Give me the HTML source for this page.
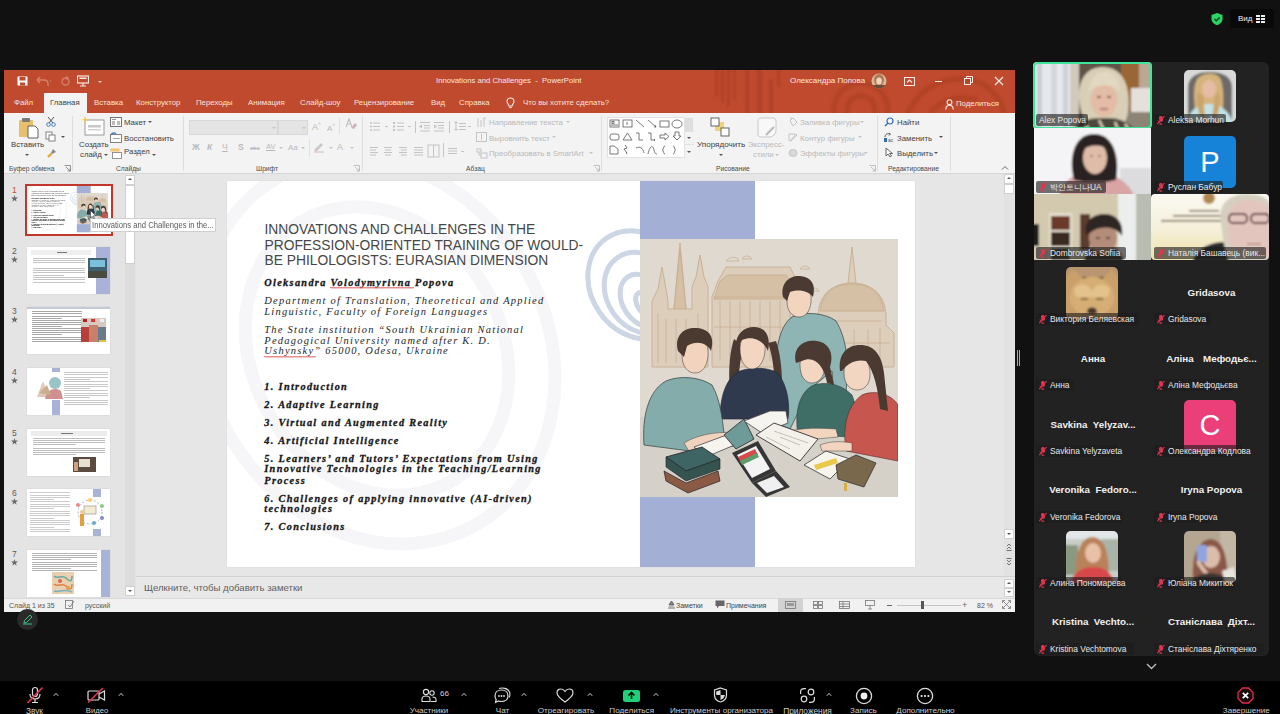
<!DOCTYPE html>
<html><head><meta charset="utf-8">
<style>
*{margin:0;padding:0;box-sizing:border-box}
html,body{width:1280px;height:714px;overflow:hidden;background:#111111;font-family:"Liberation Sans",sans-serif;position:relative}
.a{position:absolute}
.t{position:absolute;white-space:nowrap;line-height:1}
.tab{top:99px;font-size:7.8px;color:#f9e2db}
.rt{font-size:7.8px;color:#3f3f3f}
.dt{font-size:7.8px;color:#b9b9b9}
.gl{top:165.5px;font-size:6.7px;color:#4a4a4a}
.arr{width:0;height:0;border-left:2px solid transparent;border-right:2px solid transparent;border-top:2px solid #555}
.arr.dis{border-top-color:#c4c4c4}
.vsep{top:116px;width:1px;height:55px;background:#dedede}
.lab{position:absolute;height:12px;background:rgba(30,30,30,.72);border-radius:2px;font-size:8px;color:#e6e6e6;line-height:12px;padding:0 3px 0 15px;white-space:nowrap}
.lab.nomic{padding-left:3px}
.nm{position:absolute;width:118px;text-align:center;font-size:9.8px;font-weight:bold;color:#f0f0f0;white-space:nowrap;line-height:1}
.tb{position:absolute;top:704px;font-size:8px;color:#d0d0d0;white-space:nowrap;line-height:1}
.arr.up{border-top:0;border-bottom:2px solid #555}
.stitle{font-size:13.8px;letter-spacing:0;color:#474747}
.sbi{font-family:"Liberation Serif",serif;font-weight:bold;font-style:italic;font-size:10.28px;letter-spacing:1.33px;color:#161616;-webkit-text-stroke:0.3px #161616}
.si{font-family:"Liberation Serif",serif;font-style:italic;font-size:10.48px;letter-spacing:1.24px;color:#262626}
</style></head><body>
<!-- top right view button -->
<div class="a" style="left:1230px;top:9px;width:44px;height:19px;background:#090909;border-radius:4px"></div>
<svg class="a" style="left:1210px;top:12px" width="14" height="14" viewBox="0 0 14 14"><path d="M7 1 L12.5 3 V7 C12.5 10 10 12.2 7 13.2 C4 12.2 1.5 10 1.5 7 V3 Z" fill="#2ad463"/><path d="M4.5 7 L6.3 8.8 L9.6 5.4" stroke="#0c3d1c" stroke-width="1.5" fill="none"/></svg>
<div class="t" style="left:1238px;top:15px;font-size:8px;color:#eee">Вид</div>
<svg class="a" style="left:1256px;top:15px" width="9" height="8" viewBox="0 0 9 8"><g fill="#eee"><rect x="0" y="0" width="4" height="2"/><rect x="5" y="0" width="4" height="2"/><rect x="0" y="3" width="4" height="2"/><rect x="5" y="3" width="4" height="2"/><rect x="0" y="6" width="4" height="2"/><rect x="5" y="6" width="4" height="2"/></g></svg>
<!-- ===== PPT WINDOW ===== -->
<div class="a" style="left:4px;top:70px;width:1011px;height:542px;background:#e6e6e6"></div>
<div class="a" style="left:4px;top:70px;width:1011px;height:43px;background:#bf4a2d"></div>
<!-- decorative pattern -->
<svg class="a" style="left:701px;top:70px" width="314" height="43" viewBox="0 0 314 43">
  <defs><filter id="pb" x="-5%" y="-20%" width="110%" height="140%"><feGaussianBlur stdDeviation="1.3"/></filter><clipPath id="pc"><rect width="314" height="43"/></clipPath></defs>
  <g clip-path="url(#pc)"><g filter="url(#pb)">
  <g fill="#ae3f26" opacity="0.75">
    <rect x="14" y="-4" width="3" height="30"/><rect x="20" y="-4" width="3" height="36"/><rect x="26" y="-4" width="3" height="40"/><rect x="32" y="-4" width="3" height="34"/>
    <rect x="44" y="-4" width="4" height="48"/><rect x="56" y="-4" width="5" height="48"/>
    <rect x="68" y="10" width="4" height="34"/><rect x="76" y="-4" width="3" height="20"/>
  </g>
  <g fill="none" stroke="#ad3f26" stroke-width="5" opacity="0.7">
    <circle cx="160" cy="40" r="14"/><circle cx="160" cy="40" r="27"/>
    <path d="M205 48 C215 20 240 5 270 10 C290 14 300 30 305 48"/><path d="M226 48 C236 30 256 24 276 30"/>
  </g>
  </g></g>
</svg>
<!-- QAT -->
<svg class="a" style="left:17px;top:76px" width="11" height="10" viewBox="0 0 11 10"><rect x="0.5" y="0.5" width="10" height="9" fill="#fff" rx="0.5"/><rect x="2.5" y="1" width="6" height="3.5" fill="#bf4a2d"/><rect x="3" y="6.5" width="5" height="3" fill="#bf4a2d"/></svg>
<svg class="a" style="left:36px;top:76px" width="16" height="11" viewBox="0 0 16 11"><path d="M2 4 H8 C11 4 12 6 12 8 V10" stroke="#d9826c" stroke-width="1.4" fill="none"/><path d="M1 4 L4 1 M1 4 L4 7" stroke="#d9826c" stroke-width="1.4"/><circle cx="14.5" cy="5" r="0.8" fill="#d9826c"/></svg>
<svg class="a" style="left:61px;top:76px" width="9" height="10" viewBox="0 0 9 10"><circle cx="4.5" cy="5.5" r="3.5" stroke="#d9826c" stroke-width="1.3" fill="none"/><path d="M5 0.5 L7 2 L5 3.5" stroke="#d9826c" stroke-width="1.2" fill="none"/></svg>
<svg class="a" style="left:77px;top:75px" width="12" height="12" viewBox="0 0 12 12"><rect x="0.5" y="1" width="11" height="7" fill="none" stroke="#fbe9e4" stroke-width="1.2"/><rect x="2.5" y="2.5" width="7" height="1.5" fill="#fbe9e4"/><path d="M6 8 V11 M3 11 H9" stroke="#fbe9e4" stroke-width="1.2"/></svg>
<div class="a" style="left:98px;top:81px;width:4px;height:2px;border-left:2px solid transparent;border-right:2px solid transparent;border-top:2.5px solid #f3d4cb"></div>
<div class="t" style="left:436px;top:77px;font-size:7.7px;color:#fbe7e1">Innovations and Challenges&nbsp; - &nbsp;PowerPoint</div>
<div class="t" style="left:790px;top:77px;font-size:8px;color:#fbe7e1">Олександра Попова</div>
<svg class="a" style="left:871px;top:73px" width="16" height="16" viewBox="0 0 16 16"><defs><clipPath id="avc"><circle cx="8" cy="8" r="7.5"/></clipPath></defs><g clip-path="url(#avc)"><rect width="16" height="16" fill="#d8b89c"/><ellipse cx="8" cy="7" rx="5" ry="6" fill="#b07a52"/><ellipse cx="8" cy="8" rx="2.8" ry="3.5" fill="#f0d4bd"/><rect x="2" y="12" width="12" height="5" fill="#6e4b36"/></g></svg>
<svg class="a" style="left:904px;top:77px" width="11" height="9" viewBox="0 0 11 9"><rect x="0.5" y="0.5" width="10" height="8" fill="none" stroke="#fbe9e4" stroke-width="1"/><path d="M3 5.5 L5.5 3 L8 5.5" stroke="#fbe9e4" stroke-width="1.1" fill="none"/></svg>
<div class="a" style="left:935px;top:81px;width:7px;height:1px;background:#fbe9e4"></div>
<svg class="a" style="left:964px;top:76px" width="9" height="9" viewBox="0 0 9 9"><rect x="0.5" y="2.5" width="6" height="6" fill="none" stroke="#fbe9e4" stroke-width="1"/><path d="M2.5 2.5 V0.5 H8.5 V6.5 H6.5" fill="none" stroke="#fbe9e4" stroke-width="1"/></svg>
<svg class="a" style="left:994px;top:76px" width="10" height="10" viewBox="0 0 10 10"><path d="M1 1 L9 9 M9 1 L1 9" stroke="#fbe9e4" stroke-width="1.2"/></svg>

<!-- tabs -->
<div class="a" style="left:44px;top:93px;width:43px;height:20px;background:#f3f3f3"></div>
<div class="t tab" style="left:14px;">Файл</div>
<div class="t tab" style="left:50px;color:#444">Главная</div>
<div class="t tab" style="left:94px;">Вставка</div>
<div class="t tab" style="left:136px;">Конструктор</div>
<div class="t tab" style="left:196px;">Переходы</div>
<div class="t tab" style="left:248px;">Анимация</div>
<div class="t tab" style="left:300px;">Слайд-шоу</div>
<div class="t tab" style="left:354px;">Рецензирование</div>
<div class="t tab" style="left:431px;">Вид</div>
<div class="t tab" style="left:459px;">Справка</div>
<svg class="a" style="left:506px;top:97px" width="9" height="12" viewBox="0 0 9 12"><path d="M4.5 1 C2 1 1 3 1 4.5 C1 6.5 3 7.5 3 9 H6 C6 7.5 8 6.5 8 4.5 C8 3 7 1 4.5 1 Z" fill="none" stroke="#fbe9e4" stroke-width="1.1"/><path d="M3.2 10.5 H5.8" stroke="#fbe9e4" stroke-width="1.1"/></svg>
<div class="t tab" style="left:523px;">Что вы хотите сделать?</div>
<svg class="a" style="left:945px;top:99px" width="9" height="11" viewBox="0 0 9 11"><circle cx="4.5" cy="3.2" r="2.4" fill="none" stroke="#fbe9e4" stroke-width="1.1"/><path d="M0.8 10.5 C0.8 7.5 2.5 6.2 4.5 6.2 C6.5 6.2 8.2 7.5 8.2 10.5" fill="none" stroke="#fbe9e4" stroke-width="1.1"/></svg>
<div class="t tab" style="left:956px;top:100px">Поделиться</div>

<!-- ribbon body -->
<div class="a" style="left:4px;top:113px;width:1011px;height:61px;background:#f3f3f3;border-bottom:1px solid #d6d6d6"></div>
<!-- separators -->
<div class="a vsep" style="left:72px"></div>
<div class="a vsep" style="left:183px"></div>
<div class="a vsep" style="left:362px"></div>
<div class="a vsep" style="left:601px"></div>
<div class="a vsep" style="left:877px"></div>
<div class="a vsep" style="left:950px"></div>
<!-- Clipboard -->
<svg class="a" style="left:18px;top:117px" width="22" height="22" viewBox="0 0 22 22"><rect x="1" y="3" width="14" height="17" rx="1" fill="#e9be6c"/><rect x="4" y="1" width="8" height="4" rx="1" fill="#7a7a7a"/><path d="M10 9 H17 L20 12 V21 H10 Z" fill="#fff" stroke="#555" stroke-width="0.9"/></svg>
<div class="t rt" style="left:11px;top:141px">Вставить</div>
<div class="a arr" style="left:25px;top:154px"></div>
<svg class="a" style="left:46px;top:116px" width="10" height="11" viewBox="0 0 10 11"><path d="M2 1 L7 7 M8 1 L3 7" stroke="#555" stroke-width="1"/><circle cx="2.5" cy="8.5" r="1.8" fill="none" stroke="#3d7bc4" stroke-width="1"/><circle cx="7.5" cy="8.5" r="1.8" fill="none" stroke="#3d7bc4" stroke-width="1"/></svg>
<svg class="a" style="left:45px;top:131px" width="11" height="11" viewBox="0 0 11 11"><rect x="1" y="1" width="6" height="7" fill="#fff" stroke="#777" stroke-width="0.9"/><rect x="4" y="4" width="6" height="6" fill="#fff" stroke="#777" stroke-width="0.9"/></svg>
<div class="a arr" style="left:61px;top:136px"></div>
<svg class="a" style="left:47px;top:148px" width="10" height="10" viewBox="0 0 10 10"><path d="M6 1 L9 4 L5 6 L4 5 Z" fill="#888"/><path d="M4.5 5.5 L1 9" stroke="#e6a83a" stroke-width="2.4"/></svg>
<div class="t gl" style="left:9px">Буфер обмена</div>
<svg class="a launch" style="left:64px;top:165px" width="7" height="7" viewBox="0 0 7 7"><path d="M0.5 0.5 H6.5 V6.5 M2 2 L6 6 M6 3.5 V6 H3.5" stroke="#888" stroke-width="0.9" fill="none"/></svg>
<!-- Slides -->
<svg class="a" style="left:82px;top:116px" width="23" height="20" viewBox="0 0 23 20"><rect x="3" y="4" width="19" height="15" fill="#fff" stroke="#9a9a9a" stroke-width="1"/><rect x="6" y="9" width="13" height="2.5" fill="#c8c8c8"/><rect x="6" y="13" width="13" height="1.5" fill="#d4d4d4"/><path d="M3 0 L4 3 L7 3.5 L4 4.5 L3 7.5 L2 4.5 L0 3.5 L2 3 Z" fill="#f3c94a"/></svg>
<div class="t rt" style="left:79px;top:141px">Создать</div>
<div class="t rt" style="left:80px;top:151px">слайд</div>
<div class="a arr" style="left:104px;top:154px"></div>
<svg class="a" style="left:110px;top:117px" width="12" height="10" viewBox="0 0 12 10"><rect x="0.5" y="0.5" width="11" height="9" fill="#fff" stroke="#666" stroke-width="0.9"/><rect x="2" y="2" width="4" height="1" fill="#999"/><rect x="2" y="4" width="3" height="4" fill="#bbb"/><rect x="7" y="4" width="3" height="4" fill="#bbb"/></svg>
<div class="t rt" style="left:124px;top:119px">Макет</div>
<div class="a arr" style="left:148px;top:121px"></div>
<svg class="a" style="left:110px;top:132px" width="12" height="11" viewBox="0 0 12 11"><rect x="0.5" y="2.5" width="11" height="8" fill="#fff" stroke="#777" stroke-width="0.9"/><path d="M1 3 C2 0.5 5 0.5 6 2" stroke="#3d7bc4" stroke-width="1.3" fill="none"/><rect x="3" y="6" width="7" height="1" fill="#aaa"/></svg>
<div class="t rt" style="left:124px;top:134.5px">Восстановить</div>
<svg class="a" style="left:110px;top:148px" width="12" height="11" viewBox="0 0 12 11"><rect x="0.5" y="0.5" width="9" height="3" fill="#f1c36a"/><rect x="2.5" y="4.5" width="9" height="6" fill="#fff" stroke="#888" stroke-width="0.9"/></svg>
<div class="t rt" style="left:124px;top:148px">Раздел</div>
<div class="a arr" style="left:152px;top:154px"></div>
<div class="t gl" style="left:116px">Слайды</div>
<!-- Font -->
<div class="a" style="left:189px;top:120px;width:89px;height:15px;background:#e4e4e4;border:1px solid #d8d8d8"></div>
<div class="a" style="left:278px;top:120px;width:30px;height:15px;background:#e4e4e4;border:1px solid #d8d8d8"></div>
<div class="a arr dis" style="left:272px;top:127px"></div>
<div class="a arr dis" style="left:302px;top:127px"></div>
<div class="t dt" style="left:312px;top:122px;font-size:9px">A<sup style="font-size:5px">˄</sup></div>
<div class="t dt" style="left:327px;top:123px;font-size:8px">A<sup style="font-size:5px">˅</sup></div>
<div class="a" style="left:339px;top:118px;width:1px;height:16px;background:#e0e0e0"></div>
<svg class="a" style="left:345px;top:118px" width="12" height="12" viewBox="0 0 12 12"><path d="M1 9 L4 1 L7 9 M2.2 6 H5.8" stroke="#c0c0c0" stroke-width="1.2" fill="none"/><path d="M6 10 L10 5 L12 7 L9 11 Z" fill="#d0b0c0"/></svg>
<div class="t dt" style="left:192px;top:143px;font-size:8.5px;font-weight:bold">Ж</div>
<div class="t dt" style="left:207px;top:143px;font-size:8.5px;font-weight:bold;font-style:italic">К</div>
<div class="t dt" style="left:222px;top:143px;font-size:8.5px;text-decoration:underline">Ч</div>
<div class="t dt" style="left:238px;top:143px;font-size:8.5px;font-weight:bold">S</div>
<div class="t dt" style="left:250px;top:145px;font-size:6px;text-decoration:line-through">abc</div>
<div class="t dt" style="left:266px;top:143px;font-size:7.5px;text-decoration:underline">AV</div>
<div class="a arr dis" style="left:279px;top:147px"></div>
<div class="t dt" style="left:288px;top:144px;font-size:8px">Aa</div>
<div class="a arr dis" style="left:301px;top:147px"></div>
<div class="a" style="left:309px;top:140px;width:1px;height:16px;background:#e0e0e0"></div>
<svg class="a" style="left:313px;top:142px" width="12" height="11" viewBox="0 0 12 11"><path d="M2 9 L9 2" stroke="#c8c8c8" stroke-width="2.5"/><path d="M1 10 H11" stroke="#e4c8d8" stroke-width="1.5"/></svg>
<div class="a arr dis" style="left:329px;top:147px"></div>
<div class="t dt" style="left:337px;top:143px;font-size:9px">A</div>
<div class="a arr dis" style="left:350px;top:147px"></div>
<div class="t gl" style="left:256px">Шрифт</div>
<svg class="a launch" style="left:353px;top:165px" width="7" height="7" viewBox="0 0 7 7"><path d="M0.5 0.5 H6.5 V6.5 M2 2 L6 6 M6 3.5 V6 H3.5" stroke="#bbb" stroke-width="0.9" fill="none"/></svg>
<!-- Paragraph -->
<svg class="a" style="left:368px;top:121px" width="240" height="42" viewBox="0 0 240 42">
 <g fill="#c4c4c4">
  <!-- bullets -->
  <circle cx="3" cy="2" r="1"/><circle cx="3" cy="5.5" r="1"/><circle cx="3" cy="9" r="1"/>
  <rect x="5" y="1.5" width="7" height="1"/><rect x="5" y="5" width="7" height="1"/><rect x="5" y="8.5" width="7" height="1"/>
  <rect x="17" y="5" width="3" height="1"/>
  <!-- numbering -->
  <rect x="25" y="1" width="2" height="2"/><rect x="25" y="4.5" width="2" height="2"/><rect x="25" y="8" width="2" height="2"/>
  <rect x="29" y="1.5" width="7" height="1"/><rect x="29" y="5" width="7" height="1"/><rect x="29" y="8.5" width="7" height="1"/>
  <rect x="40" y="5" width="3" height="1"/>
  <rect x="47" y="-2" width="1" height="14"/>
  <!-- indent -->
  <rect x="52" y="1" width="10" height="1"/><rect x="56" y="4" width="6" height="1"/><rect x="56" y="6.5" width="6" height="1"/><rect x="52" y="9.5" width="10" height="1"/><path d="M51 5.5 L54 3.5 V7.5 Z"/>
  <rect x="66" y="1" width="10" height="1"/><rect x="70" y="4" width="6" height="1"/><rect x="70" y="6.5" width="6" height="1"/><rect x="66" y="9.5" width="10" height="1"/><path d="M69 5.5 L66 3.5 V7.5 Z"/>
  <rect x="81" y="-2" width="1" height="14"/>
  <!-- line spacing -->
  <rect x="91" y="2" width="7" height="1"/><rect x="91" y="5" width="7" height="1"/><rect x="91" y="8" width="7" height="1"/><path d="M88 0 L90 2 H86 Z M88 10 L90 8 H86 Z"/><rect x="87.5" y="2" width="1" height="6"/>
  <rect x="100" y="5" width="3" height="1"/>
  <!-- row 2 aligns -->
  <rect x="2" y="26" width="8" height="1"/><rect x="2" y="28.5" width="6" height="1"/><rect x="2" y="31" width="8" height="1"/><rect x="2" y="33.5" width="6" height="1"/>
  <rect x="16" y="26" width="8" height="1"/><rect x="17" y="28.5" width="6" height="1"/><rect x="16" y="31" width="8" height="1"/><rect x="17" y="33.5" width="6" height="1"/>
  <rect x="31" y="26" width="8" height="1"/><rect x="33" y="28.5" width="6" height="1"/><rect x="31" y="31" width="8" height="1"/><rect x="33" y="33.5" width="6" height="1"/>
  <rect x="46" y="26" width="9" height="1"/><rect x="46" y="28.5" width="9" height="1"/><rect x="46" y="31" width="9" height="1"/><rect x="46" y="33.5" width="9" height="1"/>
  <rect x="60" y="24" width="11" height="12" fill="none" stroke="#c4c4c4" stroke-width="1"/><rect x="65" y="24" width="1" height="12"/>
  <rect x="75" y="22" width="1" height="14"/>
  <rect x="80" y="27" width="9" height="1"/><rect x="80" y="29.5" width="9" height="1"/><rect x="80" y="32" width="9" height="1"/>
  <rect x="93" y="30" width="3" height="1"/>
 </g>
</svg>
<svg class="a" style="left:476px;top:116px" width="12" height="43" viewBox="0 0 12 43"><g stroke="#c4c4c4" stroke-width="1" fill="none"><path d="M2 2 V11 M5 4 V11 M8 2 V11 M8 1 L9.5 3"/><rect x="0.5" y="16.5" width="10" height="9"/><path d="M5.5 18 V24"/><rect x="1" y="33" width="4" height="3"/><rect x="5" y="37" width="6" height="5"/><path d="M3 36 V39 H5"/></g></svg>
<div class="t dt" style="left:489px;top:119px">Направление текста</div>
<div class="a arr dis" style="left:566px;top:121px"></div>
<div class="t dt" style="left:489px;top:134.5px">Выровнить текст</div>
<div class="a arr dis" style="left:552px;top:136px"></div>
<div class="t dt" style="left:489px;top:149.5px">Преобразовать в SmartArt</div>
<div class="a arr dis" style="left:589px;top:152px"></div>
<div class="t gl" style="left:466px">Абзац</div>
<svg class="a launch" style="left:593px;top:165px" width="7" height="7" viewBox="0 0 7 7"><path d="M0.5 0.5 H6.5 V6.5 M2 2 L6 6 M6 3.5 V6 H3.5" stroke="#bbb" stroke-width="0.9" fill="none"/></svg>
<!-- Drawing -->
<div class="a" style="left:607px;top:117px;width:87px;height:41px;background:#fff;border:1px solid #e2e2e2"></div>
<div class="a" style="left:684px;top:117px;width:10px;height:41px;background:#f3f3f3;border-left:1px solid #e2e2e2"></div>
<div class="a" style="left:685px;top:118px;width:8px;height:13px;background:#dedede"></div>
<div class="a arr" style="left:687px;top:137px"></div>
<div class="a arr" style="left:687px;top:151px"></div>
<div class="a" style="left:685px;top:131px;width:9px;height:1px;background:#e2e2e2"></div>
<div class="a" style="left:685px;top:144px;width:9px;height:1px;background:#e2e2e2"></div>
<svg class="a" style="left:608px;top:118px" width="76" height="40" viewBox="0 0 76 40"><g stroke="#6a6a6a" stroke-width="0.9" fill="none">
 <rect x="2" y="2" width="9" height="7"/><path d="M3 7 H10"/><rect x="4" y="3.5" width="2" height="2"/>
 <rect x="15" y="2" width="9" height="7"/><path d="M19 4 V7"/>
 <path d="M28 2 L36 9"/><path d="M40 2 L48 9 M47 7 L48 9 L46 9"/>
 <rect x="52" y="3" width="9" height="6"/><ellipse cx="69" cy="6" rx="5" ry="4"/>
 <rect x="2" y="16" width="9" height="6" rx="2"/><path d="M15 22 L19.5 15 L24 22 Z"/>
 <path d="M28 15 H31 V22 H35"/><path d="M40 15 H43 V22 H47 M46 21 L47 22 L46 23"/>
 <path d="M52 17 H57 V15 L61 18.5 L57 22 V20 H52 Z"/><path d="M67 14 H71 V18 H73 L69 22 L65 18 H67 Z"/>
 <path d="M2 28 H6 L10 31 V36 H2 Z"/><path d="M17 27 L19 30 L16 31 L19 35 M18 34 L19 35 L18 36"/>
 <path d="M28 30 C32 28 35 30 36 35"/><path d="M40 36 C42 27 45 27 46 32 C47 36 48 36 49 36"/>
 <path d="M57 28 C55 28 56 31 54.5 32 C56 33 55 36 57 36"/><path d="M65 28 C67 28 66 31 67.5 32 C66 33 67 36 65 36"/>
</g></svg>
<svg class="a" style="left:710px;top:117px" width="21" height="20" viewBox="0 0 21 20"><rect x="5" y="5" width="9" height="9" fill="#efd27a"/><rect x="1" y="1" width="8" height="8" fill="#fff" stroke="#555" stroke-width="0.9"/><rect x="11" y="11" width="8" height="8" fill="#fff" stroke="#555" stroke-width="0.9"/></svg>
<div class="t rt" style="left:697px;top:141px;font-size:8.1px">Упорядочить</div>
<div class="a arr" style="left:719px;top:154px"></div>
<svg class="a" style="left:756px;top:117px" width="22" height="22" viewBox="0 0 22 22"><path d="M2 4 C2 2 3 1 5 1 H16 C19 1 20 2 20 5 V13 C20 17 17 20 13 20 H5 C3 20 2 19 2 17 Z" fill="#f8f8f8" stroke="#c8c8c8" stroke-width="1"/><path d="M10 18 L18 10" stroke="#b8b8b8" stroke-width="2"/></svg>
<div class="t dt" style="left:748px;top:141px">Экспресс-</div>
<div class="t dt" style="left:753px;top:151px">стили</div>
<div class="a arr dis" style="left:775px;top:154px"></div>
<svg class="a" style="left:788px;top:116px" width="10" height="42" viewBox="0 0 10 42"><g stroke="#c4c4c4" fill="none" stroke-width="1"><path d="M2 5 L5 2 L9 6 L5 10 Z"/><path d="M3 1 V4"/><path d="M1 25 V18 H7 M2 25 L8 18 L9 19 L3 25 Z"/><ellipse cx="5" cy="37" rx="4" ry="3.5" fill="#d8d8d8"/></g></svg>
<div class="t dt" style="left:800px;top:119px">Заливка фигуры</div>
<div class="a arr dis" style="left:860px;top:121px"></div>
<div class="t dt" style="left:800px;top:134.5px">Контур фигуры</div>
<div class="a arr dis" style="left:858px;top:136px"></div>
<div class="t dt" style="left:800px;top:149.5px">Эффекты фигуры</div>
<div class="a arr dis" style="left:864px;top:152px"></div>
<div class="t gl" style="left:716px">Рисование</div>
<svg class="a launch" style="left:869px;top:165px" width="7" height="7" viewBox="0 0 7 7"><path d="M0.5 0.5 H6.5 V6.5 M2 2 L6 6 M6 3.5 V6 H3.5" stroke="#bbb" stroke-width="0.9" fill="none"/></svg>
<!-- Editing -->
<svg class="a" style="left:884px;top:117px" width="10" height="10" viewBox="0 0 10 10"><circle cx="6" cy="4" r="3" fill="none" stroke="#2f6ab8" stroke-width="1.2"/><path d="M3.8 6.2 L1 9" stroke="#2f6ab8" stroke-width="1.4"/></svg>
<div class="t rt" style="left:897px;top:119px">Найти</div>
<svg class="a" style="left:883px;top:132px" width="11" height="11" viewBox="0 0 11 11"><path d="M2 5 C2 2 5 1 7 2" stroke="#555" stroke-width="1" fill="none"/><path d="M6 1 L7.5 2 L6 3.5" stroke="#555" fill="none"/><rect x="1" y="6" width="3" height="4" fill="#2f6ab8"/><text x="5" y="10" font-size="5" fill="#555" font-family="Liberation Sans">ac</text></svg>
<div class="t rt" style="left:897px;top:134.5px">Заменить</div>
<div class="a arr" style="left:939px;top:136px"></div>
<svg class="a" style="left:885px;top:147px" width="9" height="11" viewBox="0 0 9 11"><path d="M1 1 V9 L3 7 L5 10 L6.5 9 L4.5 6.5 H7.5 Z" fill="#fff" stroke="#555" stroke-width="0.9"/></svg>
<div class="t rt" style="left:897px;top:149.5px">Выделить</div>
<div class="a arr" style="left:934px;top:152px"></div>
<div class="t gl" style="left:888px">Редактирование</div>
<svg class="a" style="left:1001px;top:165px" width="8" height="5" viewBox="0 0 8 5"><path d="M1 4.5 L4 1.5 L7 4.5" stroke="#666" stroke-width="1" fill="none"/></svg>
<!-- ===== SLIDE AREA ===== -->
<div class="a" style="left:4px;top:174px;width:132px;height:424px;background:#e4e4e4"></div>
<div class="a" style="left:136px;top:174px;width:879px;height:402px;background:#e6e6e6"></div>
<div class="a" style="left:125px;top:175px;width:10px;height:421px;background:#dcdcdc"></div>
<div class="a" style="left:125px;top:175px;width:10px;height:10px;background:#fff;border:1px solid #d0d0d0"></div>
<div class="a arr up" style="left:128px;top:178px"></div>
<div class="a" style="left:125px;top:185px;width:10px;height:79px;background:#fff;border:1px solid #d0d0d0"></div>
<div class="a" style="left:125px;top:586px;width:10px;height:10px;background:#fff;border:1px solid #d0d0d0"></div>
<div class="a arr" style="left:128px;top:590px"></div>
<div class="a" style="left:227px;top:181px;width:688px;height:386px;overflow:hidden;box-shadow:0 0 1px #c8c8c8">
<div class="a" style="left:0;top:0;width:688px;height:386px;background:#fff"></div>
<svg class="a" style="left:0;top:0" width="688" height="386" viewBox="0 0 688 386">
 <g fill="none" stroke="#f6f6f9" stroke-width="13">
  <ellipse cx="0" cy="0" rx="125" ry="150" transform="translate(150 170) rotate(-30)"/>
  <ellipse cx="0" cy="0" rx="170" ry="200" transform="translate(150 170) rotate(-30)"/>
 </g>
 <g fill="none" stroke="#ccd6e4" stroke-width="5">
  <ellipse cx="0" cy="0" rx="48" ry="57" transform="translate(412 104) rotate(-35)"/>
  <ellipse cx="0" cy="0" rx="35" ry="43" transform="translate(415 112) rotate(-35)"/>
  <ellipse cx="0" cy="0" rx="21" ry="29" transform="translate(417 120) rotate(-35)"/>
  <ellipse cx="0" cy="0" rx="8" ry="14" transform="translate(419 124) rotate(-35)"/>
 </g>
</svg>
<div class="a" style="left:413px;top:0;width:115px;height:58px;background:#a4afd6"></div>
<div class="a" style="left:413px;top:316px;width:115px;height:70px;background:#a4afd6"></div>
<div class="t stitle" style="left:37.5px;top:42.3px">INNOVATIONS AND CHALLENGES IN THE</div>
<div class="t stitle" style="left:37.5px;top:57.7px">PROFESSION-ORIENTED TRAINING OF WOULD-</div>
<div class="t stitle" style="left:37.5px;top:73.3px">BE PHILOLOGISTS: EURASIAN DIMENSION</div>
<div class="t sbi" style="left:37.3px;top:96.59px">Oleksandra Volodymyrivna Popova</div>
<div class="t si" style="left:37.3px;top:114.82px">Department of Translation, Theoretical and Applied</div>
<div class="t si" style="left:37.3px;top:125.72px">Linguistic, Faculty of Foreign Languages</div>
<div class="t si" style="left:37.3px;top:143.72px">The State institution “South Ukrainian National</div>
<div class="t si" style="left:37.3px;top:154.72px">Pedagogical University named after K. D.</div>
<div class="t si" style="left:37.3px;top:165.32px">Ushynsky” 65000, Odesa, Ukraine</div>
<div class="t sbi" style="left:37.3px;top:201.39px">1. Introduction</div>
<div class="t sbi" style="left:37.3px;top:219.29px">2. Adaptive Learning</div>
<div class="t sbi" style="left:37.3px;top:237.19px">3. Virtual and Augmented Reality</div>
<div class="t sbi" style="left:37.3px;top:254.69px">4. Artificial Intelligence</div>
<div class="t sbi" style="left:37.3px;top:272.59px">5. Learners’ and Tutors’ Expectations from Using</div>
<div class="t sbi" style="left:37.3px;top:283.39px">Innovative Technologies in the Teaching/Learning</div>
<div class="t sbi" style="left:37.3px;top:294.59px">Process</div>
<div class="t sbi" style="left:37.3px;top:312.89px">6. Challenges of applying innovative (AI-driven)</div>
<div class="t sbi" style="left:37.3px;top:322.99px">technologies</div>
<div class="t sbi" style="left:37.3px;top:340.89px">7. Conclusions</div>
<svg class="a" style="left:103px;top:105px" width="84" height="3" viewBox="0 0 84 3"><path d="M0 2 L1 1 L2 2.5 L3 1 L4 2.5 L5 1 L6 2.5 L7 1 L8 2.5 L9 1 L10 2.5 L11 1 L12 2.5 L13 1 L14 2.5 L15 1 L16 2.5 L17 1 L18 2.5 L19 1 L20 2.5 L21 1 L22 2.5 L23 1 L24 2.5 L25 1 L26 2.5 L27 1 L28 2.5 L29 1 L30 2.5 L31 1 L32 2.5 L33 1 L34 2.5 L35 1 L36 2.5 L37 1 L38 2.5 L39 1 L40 2.5 L41 1 L42 2.5 L43 1 L44 2.5 L45 1 L46 2.5 L47 1 L48 2.5 L49 1 L50 2.5 L51 1 L52 2.5 L53 1 L54 2.5 L55 1 L56 2.5 L57 1 L58 2.5 L59 1 L60 2.5 L61 1 L62 2.5 L63 1 L64 2.5 L65 1 L66 2.5 L67 1 L68 2.5 L69 1 L70 2.5 L71 1 L72 2.5 L73 1 L74 2.5 L75 1 L76 2.5 L77 1 L78 2.5 L79 1 L80 2.5 L81 1 L82 2.5 L83 1 L84 2.5" stroke="#e06060" stroke-width="0.8" fill="none"/></svg>
<svg class="a" style="left:37px;top:173.5px" width="52" height="3" viewBox="0 0 52 3"><path d="M0 2 L1 1 L2 2.5 L3 1 L4 2.5 L5 1 L6 2.5 L7 1 L8 2.5 L9 1 L10 2.5 L11 1 L12 2.5 L13 1 L14 2.5 L15 1 L16 2.5 L17 1 L18 2.5 L19 1 L20 2.5 L21 1 L22 2.5 L23 1 L24 2.5 L25 1 L26 2.5 L27 1 L28 2.5 L29 1 L30 2.5 L31 1 L32 2.5 L33 1 L34 2.5 L35 1 L36 2.5 L37 1 L38 2.5 L39 1 L40 2.5 L41 1 L42 2.5 L43 1 L44 2.5 L45 1 L46 2.5 L47 1 L48 2.5 L49 1 L50 2.5 L51 1 L52 2.5" stroke="#e06060" stroke-width="0.8" fill="none"/></svg>
<svg class="a" style="left:413px;top:58px" width="258" height="258" viewBox="0 0 258 258">
 <rect width="258" height="258" fill="#dfd9cf"/>
 <path d="M0 178 C60 170 200 168 258 172 V258 H0 Z" fill="#d5d0c8"/>
 <!-- buildings -->
 <g fill="#dccebb" stroke="#c7ae90" stroke-width="0.9">
  <path d="M12 128 V62 L18 50 L22 28 L26 50 L28 62 V70 H34 L40 4 L46 70 H52 V48 L56 38 L60 16 L64 38 L68 48 V128 Z"/>
  <path d="M34 70 L40 10 L46 70 Z" fill="#d5c0a6"/>
  <path d="M72 128 V58 L78 42 L86 28 H150 L158 44 V128 Z"/>
  <path d="M74 60 L80 42 L88 36 H146 L154 46 L156 60 Z" fill="#d5c0a6"/>
  <path d="M160 128 V60 L164 48 L168 60 V128 Z"/>
  <path d="M178 128 V78 C178 56 192 44 212 44 C232 44 246 56 246 78 V86 L254 94 V128 Z"/>
  <path d="M180 72 C182 54 194 45 212 45 C230 45 242 54 244 72 Z" fill="#d5c0a6"/>
  <path d="M208 44 L212 8 L216 44 Z"/>
 </g>
 <g fill="none" stroke="#c9b095" stroke-width="0.8">
  <path d="M80 62 V122 M90 62 V122 M100 62 V122 M110 62 V122 M120 62 V122 M130 62 V122 M140 62 V122 M150 62 V122"/>
  <path d="M74 58 H156 M74 88 H156"/>
  <path d="M184 82 H242 M184 104 H250 M190 90 V124 M200 90 V124 M214 90 V124 M228 90 V124 M240 90 V124"/>
  <path d="M18 74 V124 M26 80 V124 M36 80 V124 M46 80 V124 M58 74 V124"/>
  <path d="M86 22 C90 17 97 17 99 22 Z M102 20 C104 16 110 16 112 20 Z M160 30 C163 26 168 26 170 30 Z M168 52 C171 48 177 48 179 52 Z"/>
 </g>
 <!-- standing boy (back) -->
 <path d="M136 150 C134 116 138 88 152 78 C164 72 186 74 196 82 C206 98 210 124 206 152 L194 156 L192 132 L170 150 L150 190 L140 186 Z" fill="#8eb4b3" stroke="#3f4f4f" stroke-width="0.8"/>
 <path d="M147 62 C147 50 152 45 159 45 C168 45 172 52 171 63 C170 73 165 78 159 78 C152 78 147 72 147 62 Z" fill="#f2d4bf" stroke="#333" stroke-width="0.5"/>
 <path d="M143 58 C140 44 150 36 160 37 C172 38 176 46 173 58 C168 52 160 50 150 53 L147 62 Z" fill="#4a3a31"/>
 <!-- girl center navy -->
 <path d="M94 100 C88 118 88 146 92 170 L100 172 C98 150 98 124 104 108 Z M128 104 C134 120 136 146 134 170 L140 172 C144 150 142 118 136 102 Z" fill="#4a3a31"/>
 <path d="M80 180 C80 158 86 138 100 132 C112 128 128 128 138 134 C148 148 150 166 148 180 Z" fill="#2f3a4e" stroke="#1f2633" stroke-width="0.6"/>
 <path d="M100 110 C100 99 105 93 113 93 C122 93 126 101 125 112 C124 123 119 130 112 130 C105 130 100 122 100 110 Z" fill="#f2d6c2" stroke="#333" stroke-width="0.5"/>
 <path d="M96 112 C94 96 103 88 114 88 C126 88 131 98 128 112 C124 102 113 96 102 101 Z" fill="#4a3a31"/>
 <!-- boy left teal -->
 <path d="M4 206 C2 178 8 152 26 142 C40 136 60 138 72 146 C80 160 82 178 84 194 L100 196 L102 206 L50 212 Z" fill="#84acaa" stroke="#3c4e4e" stroke-width="0.8"/>
 <path d="M42 116 C42 104 47 98 55 98 C64 98 69 105 68 117 C67 128 62 134 55 134 C48 134 42 128 42 116 Z" fill="#f2d3bd" stroke="#333" stroke-width="0.5"/>
 <path d="M38 112 C34 96 44 88 57 89 C70 90 75 99 71 112 C67 104 57 101 47 107 L44 118 Z" fill="#4a3a30"/>
 <path d="M44 204 C60 194 82 192 104 194 L104 202 C84 204 62 208 50 214 Z" fill="#f1d2bd" stroke="#444" stroke-width="0.5"/>
 <!-- girl dark green -->
 <path d="M158 196 C154 172 160 152 174 146 C188 142 202 146 212 156 C218 172 218 188 216 198 Z" fill="#3f6e67" stroke="#263a36" stroke-width="0.6"/>
 <path d="M160 126 C160 115 165 110 172 110 C181 110 186 117 185 128 C184 138 179 144 172 144 C165 144 160 137 160 126 Z" fill="#f2d6c2" stroke="#333" stroke-width="0.5"/>
 <path d="M156 124 C152 108 164 100 177 102 C190 104 194 116 190 128 L194 146 L187 144 C184 126 174 116 162 122 Z" fill="#4a3a31"/>
 <path d="M140 196 C150 190 170 188 196 190 L198 198 C176 200 156 202 144 204 Z" fill="#f2d4bf" stroke="#444" stroke-width="0.5"/>
 <!-- girl red -->
 <path d="M206 212 C202 186 208 166 222 156 C236 150 252 156 258 166 V222 Z" fill="#c6564e" stroke="#5a2a28" stroke-width="0.6"/>
 <path d="M204 134 C204 123 209 117 217 117 C226 117 230 125 230 135 C230 146 224 151 217 151 C210 151 204 145 204 134 Z" fill="#f2d6c2" stroke="#333" stroke-width="0.5"/>
 <path d="M200 132 C198 114 208 106 220 106 C234 106 242 116 244 134 L248 172 L240 170 C238 150 234 132 226 122 C216 120 208 124 202 132 Z" fill="#4a3a31"/>
 <path d="M180 206 C190 202 200 202 212 204 L212 212 C202 212 190 212 182 212 Z" fill="#f2d4bf" stroke="#444" stroke-width="0.5"/>
 <!-- table items -->
 <path d="M54 208 L92 194 L104 202 L66 218 Z" fill="#f6f4ef" stroke="#444" stroke-width="0.8"/>
 <path d="M84 196 L104 180 L114 200 L96 210 Z" fill="#6e9a98" stroke="#333" stroke-width="0.9"/>
 <path d="M104 182 L130 172 L146 172 L148 184 L122 194 Z" fill="#f6f4ef" stroke="#444" stroke-width="0.8"/>
 <path d="M116 196 L134 184 L178 200 L160 222 Z" fill="#f4f1ea" stroke="#333" stroke-width="0.9"/>
 <path d="M134 192 L168 204 M140 198 L160 206 M126 198 L150 210" stroke="#aaa" stroke-width="0.7"/>
 <path d="M26 218 L62 208 L80 220 L46 232 Z" fill="#3e6463" stroke="#222" stroke-width="0.8"/>
 <path d="M26 218 V228 L46 242 L80 230 V220 L46 232 Z" fill="#35534f" stroke="#222" stroke-width="0.6"/>
 <path d="M24 232 L26 242 L48 254 L80 242 L78 232 L46 244 Z" fill="#8b5a45" stroke="#222" stroke-width="0.7"/>
 <path d="M92 214 L118 202 L136 232 L112 244 Z" fill="#363636"/>
 <path d="M97 216 L116 207 L130 230 L112 239 Z" fill="#f3f3f3"/>
 <path d="M98 218 L115 210 L118 216 L101 224 Z" fill="#d94a4a"/>
 <path d="M100 222 L117 214 L119 218 L102 226 Z" fill="#5a9e6a"/>
 <path d="M112 244 L136 232 L150 248 L126 258 Z" fill="#363636"/>
 <path d="M117 244 L134 237 L144 248 L127 254 Z" fill="#f0f0f0"/>
 <path d="M164 226 L186 212 L210 220 L190 240 Z" fill="#f7f5ee" stroke="#333" stroke-width="0.8"/>
 <path d="M174 226 L196 219 L198 224 L176 231 Z" fill="#e9c84a"/>
 <path d="M196 226 L216 216 L236 224 L224 248 L198 240 Z" fill="#7a684c" stroke="#333" stroke-width="0.8"/>
 <rect x="204" y="244" width="3" height="8" fill="#d8b040"/>
</svg>
</div>
<div class="a" style="left:25px;top:184px;width:88px;height:52px;border:2px solid #c1372c;background:#fff"></div>
<div class="a" style="left:27px;top:186px;width:688px;height:386px;overflow:hidden;transform-origin:0 0;transform:scale(0.12064);background:#fff">
<div class="a" style="left:0;top:0;width:688px;height:386px;background:#fff"></div>
<svg class="a" style="left:0;top:0" width="688" height="386" viewBox="0 0 688 386">
 <g fill="none" stroke="#f6f6f9" stroke-width="13">
  <ellipse cx="0" cy="0" rx="125" ry="150" transform="translate(150 170) rotate(-30)"/>
  <ellipse cx="0" cy="0" rx="170" ry="200" transform="translate(150 170) rotate(-30)"/>
 </g>
 <g fill="none" stroke="#ccd6e4" stroke-width="5">
  <ellipse cx="0" cy="0" rx="48" ry="57" transform="translate(412 104) rotate(-35)"/>
  <ellipse cx="0" cy="0" rx="35" ry="43" transform="translate(415 112) rotate(-35)"/>
  <ellipse cx="0" cy="0" rx="21" ry="29" transform="translate(417 120) rotate(-35)"/>
  <ellipse cx="0" cy="0" rx="8" ry="14" transform="translate(419 124) rotate(-35)"/>
 </g>
</svg>
<div class="a" style="left:413px;top:0;width:115px;height:58px;background:#a4afd6"></div>
<div class="a" style="left:413px;top:316px;width:115px;height:70px;background:#a4afd6"></div>
<div class="t stitle" style="left:37.5px;top:42.3px">INNOVATIONS AND CHALLENGES IN THE</div>
<div class="t stitle" style="left:37.5px;top:57.7px">PROFESSION-ORIENTED TRAINING OF WOULD-</div>
<div class="t stitle" style="left:37.5px;top:73.3px">BE PHILOLOGISTS: EURASIAN DIMENSION</div>
<div class="t sbi" style="left:37.3px;top:96.59px">Oleksandra Volodymyrivna Popova</div>
<div class="t si" style="left:37.3px;top:114.82px">Department of Translation, Theoretical and Applied</div>
<div class="t si" style="left:37.3px;top:125.72px">Linguistic, Faculty of Foreign Languages</div>
<div class="t si" style="left:37.3px;top:143.72px">The State institution “South Ukrainian National</div>
<div class="t si" style="left:37.3px;top:154.72px">Pedagogical University named after K. D.</div>
<div class="t si" style="left:37.3px;top:165.32px">Ushynsky” 65000, Odesa, Ukraine</div>
<div class="t sbi" style="left:37.3px;top:201.39px">1. Introduction</div>
<div class="t sbi" style="left:37.3px;top:219.29px">2. Adaptive Learning</div>
<div class="t sbi" style="left:37.3px;top:237.19px">3. Virtual and Augmented Reality</div>
<div class="t sbi" style="left:37.3px;top:254.69px">4. Artificial Intelligence</div>
<div class="t sbi" style="left:37.3px;top:272.59px">5. Learners’ and Tutors’ Expectations from Using</div>
<div class="t sbi" style="left:37.3px;top:283.39px">Innovative Technologies in the Teaching/Learning</div>
<div class="t sbi" style="left:37.3px;top:294.59px">Process</div>
<div class="t sbi" style="left:37.3px;top:312.89px">6. Challenges of applying innovative (AI-driven)</div>
<div class="t sbi" style="left:37.3px;top:322.99px">technologies</div>
<div class="t sbi" style="left:37.3px;top:340.89px">7. Conclusions</div>
<svg class="a" style="left:103px;top:105px" width="84" height="3" viewBox="0 0 84 3"><path d="M0 2 L1 1 L2 2.5 L3 1 L4 2.5 L5 1 L6 2.5 L7 1 L8 2.5 L9 1 L10 2.5 L11 1 L12 2.5 L13 1 L14 2.5 L15 1 L16 2.5 L17 1 L18 2.5 L19 1 L20 2.5 L21 1 L22 2.5 L23 1 L24 2.5 L25 1 L26 2.5 L27 1 L28 2.5 L29 1 L30 2.5 L31 1 L32 2.5 L33 1 L34 2.5 L35 1 L36 2.5 L37 1 L38 2.5 L39 1 L40 2.5 L41 1 L42 2.5 L43 1 L44 2.5 L45 1 L46 2.5 L47 1 L48 2.5 L49 1 L50 2.5 L51 1 L52 2.5 L53 1 L54 2.5 L55 1 L56 2.5 L57 1 L58 2.5 L59 1 L60 2.5 L61 1 L62 2.5 L63 1 L64 2.5 L65 1 L66 2.5 L67 1 L68 2.5 L69 1 L70 2.5 L71 1 L72 2.5 L73 1 L74 2.5 L75 1 L76 2.5 L77 1 L78 2.5 L79 1 L80 2.5 L81 1 L82 2.5 L83 1 L84 2.5" stroke="#e06060" stroke-width="0.8" fill="none"/></svg>
<svg class="a" style="left:37px;top:173.5px" width="52" height="3" viewBox="0 0 52 3"><path d="M0 2 L1 1 L2 2.5 L3 1 L4 2.5 L5 1 L6 2.5 L7 1 L8 2.5 L9 1 L10 2.5 L11 1 L12 2.5 L13 1 L14 2.5 L15 1 L16 2.5 L17 1 L18 2.5 L19 1 L20 2.5 L21 1 L22 2.5 L23 1 L24 2.5 L25 1 L26 2.5 L27 1 L28 2.5 L29 1 L30 2.5 L31 1 L32 2.5 L33 1 L34 2.5 L35 1 L36 2.5 L37 1 L38 2.5 L39 1 L40 2.5 L41 1 L42 2.5 L43 1 L44 2.5 L45 1 L46 2.5 L47 1 L48 2.5 L49 1 L50 2.5 L51 1 L52 2.5" stroke="#e06060" stroke-width="0.8" fill="none"/></svg>
<svg class="a" style="left:413px;top:58px" width="258" height="258" viewBox="0 0 258 258">
 <rect width="258" height="258" fill="#dfd9cf"/>
 <path d="M0 178 C60 170 200 168 258 172 V258 H0 Z" fill="#d5d0c8"/>
 <!-- buildings -->
 <g fill="#dccebb" stroke="#c7ae90" stroke-width="0.9">
  <path d="M12 128 V62 L18 50 L22 28 L26 50 L28 62 V70 H34 L40 4 L46 70 H52 V48 L56 38 L60 16 L64 38 L68 48 V128 Z"/>
  <path d="M34 70 L40 10 L46 70 Z" fill="#d5c0a6"/>
  <path d="M72 128 V58 L78 42 L86 28 H150 L158 44 V128 Z"/>
  <path d="M74 60 L80 42 L88 36 H146 L154 46 L156 60 Z" fill="#d5c0a6"/>
  <path d="M160 128 V60 L164 48 L168 60 V128 Z"/>
  <path d="M178 128 V78 C178 56 192 44 212 44 C232 44 246 56 246 78 V86 L254 94 V128 Z"/>
  <path d="M180 72 C182 54 194 45 212 45 C230 45 242 54 244 72 Z" fill="#d5c0a6"/>
  <path d="M208 44 L212 8 L216 44 Z"/>
 </g>
 <g fill="none" stroke="#c9b095" stroke-width="0.8">
  <path d="M80 62 V122 M90 62 V122 M100 62 V122 M110 62 V122 M120 62 V122 M130 62 V122 M140 62 V122 M150 62 V122"/>
  <path d="M74 58 H156 M74 88 H156"/>
  <path d="M184 82 H242 M184 104 H250 M190 90 V124 M200 90 V124 M214 90 V124 M228 90 V124 M240 90 V124"/>
  <path d="M18 74 V124 M26 80 V124 M36 80 V124 M46 80 V124 M58 74 V124"/>
  <path d="M86 22 C90 17 97 17 99 22 Z M102 20 C104 16 110 16 112 20 Z M160 30 C163 26 168 26 170 30 Z M168 52 C171 48 177 48 179 52 Z"/>
 </g>
 <!-- standing boy (back) -->
 <path d="M136 150 C134 116 138 88 152 78 C164 72 186 74 196 82 C206 98 210 124 206 152 L194 156 L192 132 L170 150 L150 190 L140 186 Z" fill="#8eb4b3" stroke="#3f4f4f" stroke-width="0.8"/>
 <path d="M147 62 C147 50 152 45 159 45 C168 45 172 52 171 63 C170 73 165 78 159 78 C152 78 147 72 147 62 Z" fill="#f2d4bf" stroke="#333" stroke-width="0.5"/>
 <path d="M143 58 C140 44 150 36 160 37 C172 38 176 46 173 58 C168 52 160 50 150 53 L147 62 Z" fill="#4a3a31"/>
 <!-- girl center navy -->
 <path d="M94 100 C88 118 88 146 92 170 L100 172 C98 150 98 124 104 108 Z M128 104 C134 120 136 146 134 170 L140 172 C144 150 142 118 136 102 Z" fill="#4a3a31"/>
 <path d="M80 180 C80 158 86 138 100 132 C112 128 128 128 138 134 C148 148 150 166 148 180 Z" fill="#2f3a4e" stroke="#1f2633" stroke-width="0.6"/>
 <path d="M100 110 C100 99 105 93 113 93 C122 93 126 101 125 112 C124 123 119 130 112 130 C105 130 100 122 100 110 Z" fill="#f2d6c2" stroke="#333" stroke-width="0.5"/>
 <path d="M96 112 C94 96 103 88 114 88 C126 88 131 98 128 112 C124 102 113 96 102 101 Z" fill="#4a3a31"/>
 <!-- boy left teal -->
 <path d="M4 206 C2 178 8 152 26 142 C40 136 60 138 72 146 C80 160 82 178 84 194 L100 196 L102 206 L50 212 Z" fill="#84acaa" stroke="#3c4e4e" stroke-width="0.8"/>
 <path d="M42 116 C42 104 47 98 55 98 C64 98 69 105 68 117 C67 128 62 134 55 134 C48 134 42 128 42 116 Z" fill="#f2d3bd" stroke="#333" stroke-width="0.5"/>
 <path d="M38 112 C34 96 44 88 57 89 C70 90 75 99 71 112 C67 104 57 101 47 107 L44 118 Z" fill="#4a3a30"/>
 <path d="M44 204 C60 194 82 192 104 194 L104 202 C84 204 62 208 50 214 Z" fill="#f1d2bd" stroke="#444" stroke-width="0.5"/>
 <!-- girl dark green -->
 <path d="M158 196 C154 172 160 152 174 146 C188 142 202 146 212 156 C218 172 218 188 216 198 Z" fill="#3f6e67" stroke="#263a36" stroke-width="0.6"/>
 <path d="M160 126 C160 115 165 110 172 110 C181 110 186 117 185 128 C184 138 179 144 172 144 C165 144 160 137 160 126 Z" fill="#f2d6c2" stroke="#333" stroke-width="0.5"/>
 <path d="M156 124 C152 108 164 100 177 102 C190 104 194 116 190 128 L194 146 L187 144 C184 126 174 116 162 122 Z" fill="#4a3a31"/>
 <path d="M140 196 C150 190 170 188 196 190 L198 198 C176 200 156 202 144 204 Z" fill="#f2d4bf" stroke="#444" stroke-width="0.5"/>
 <!-- girl red -->
 <path d="M206 212 C202 186 208 166 222 156 C236 150 252 156 258 166 V222 Z" fill="#c6564e" stroke="#5a2a28" stroke-width="0.6"/>
 <path d="M204 134 C204 123 209 117 217 117 C226 117 230 125 230 135 C230 146 224 151 217 151 C210 151 204 145 204 134 Z" fill="#f2d6c2" stroke="#333" stroke-width="0.5"/>
 <path d="M200 132 C198 114 208 106 220 106 C234 106 242 116 244 134 L248 172 L240 170 C238 150 234 132 226 122 C216 120 208 124 202 132 Z" fill="#4a3a31"/>
 <path d="M180 206 C190 202 200 202 212 204 L212 212 C202 212 190 212 182 212 Z" fill="#f2d4bf" stroke="#444" stroke-width="0.5"/>
 <!-- table items -->
 <path d="M54 208 L92 194 L104 202 L66 218 Z" fill="#f6f4ef" stroke="#444" stroke-width="0.8"/>
 <path d="M84 196 L104 180 L114 200 L96 210 Z" fill="#6e9a98" stroke="#333" stroke-width="0.9"/>
 <path d="M104 182 L130 172 L146 172 L148 184 L122 194 Z" fill="#f6f4ef" stroke="#444" stroke-width="0.8"/>
 <path d="M116 196 L134 184 L178 200 L160 222 Z" fill="#f4f1ea" stroke="#333" stroke-width="0.9"/>
 <path d="M134 192 L168 204 M140 198 L160 206 M126 198 L150 210" stroke="#aaa" stroke-width="0.7"/>
 <path d="M26 218 L62 208 L80 220 L46 232 Z" fill="#3e6463" stroke="#222" stroke-width="0.8"/>
 <path d="M26 218 V228 L46 242 L80 230 V220 L46 232 Z" fill="#35534f" stroke="#222" stroke-width="0.6"/>
 <path d="M24 232 L26 242 L48 254 L80 242 L78 232 L46 244 Z" fill="#8b5a45" stroke="#222" stroke-width="0.7"/>
 <path d="M92 214 L118 202 L136 232 L112 244 Z" fill="#363636"/>
 <path d="M97 216 L116 207 L130 230 L112 239 Z" fill="#f3f3f3"/>
 <path d="M98 218 L115 210 L118 216 L101 224 Z" fill="#d94a4a"/>
 <path d="M100 222 L117 214 L119 218 L102 226 Z" fill="#5a9e6a"/>
 <path d="M112 244 L136 232 L150 248 L126 258 Z" fill="#363636"/>
 <path d="M117 244 L134 237 L144 248 L127 254 Z" fill="#f0f0f0"/>
 <path d="M164 226 L186 212 L210 220 L190 240 Z" fill="#f7f5ee" stroke="#333" stroke-width="0.8"/>
 <path d="M174 226 L196 219 L198 224 L176 231 Z" fill="#e9c84a"/>
 <path d="M196 226 L216 216 L236 224 L224 248 L198 240 Z" fill="#7a684c" stroke="#333" stroke-width="0.8"/>
 <rect x="204" y="244" width="3" height="8" fill="#d8b040"/>
</svg>
</div><div class="t" style="left:12px;top:186.0px;font-size:8.5px;color:#c0502f">1</div>
<svg class="a" style="left:11px;top:195.0px" width="7" height="7" viewBox="0 0 10 10"><path d="M5 0 L6.2 3.6 H10 L7 5.9 L8.1 9.5 L5 7.3 L1.9 9.5 L3 5.9 L0 3.6 H3.8 Z" fill="#6a6a6a"/></svg>
<div class="t" style="left:12px;top:246.8px;font-size:8.5px;color:#5a5a5a">2</div>
<svg class="a" style="left:11px;top:255.8px" width="7" height="7" viewBox="0 0 10 10"><path d="M5 0 L6.2 3.6 H10 L7 5.9 L8.1 9.5 L5 7.3 L1.9 9.5 L3 5.9 L0 3.6 H3.8 Z" fill="#6a6a6a"/></svg>
<div class="a" style="left:27px;top:246.8px;width:83px;height:47px;background:#fff;box-shadow:0 0 1px #bdbdbd"></div>
<div class="a" style="left:96.0px;top:246.8px;width:14.0px;height:47.0px;background:#a9b3d8;"></div>
<div class="a" style="left:31.0px;top:249.8px;width:60.0px;height:5.0px;background:#efefef;"></div>
<div class="a" style="left:57.0px;top:251.8px;width:10.0px;height:1.0px;background:#777;"></div>
<div class="a" style="left:33.0px;top:257.8px;width:52.0px;height:1.0px;background:#c4c4c4;"></div><div class="a" style="left:33.0px;top:260.1px;width:52.0px;height:1.0px;background:#c4c4c4;"></div><div class="a" style="left:33.0px;top:262.4px;width:52.0px;height:1.0px;background:#c4c4c4;"></div>
<div class="a" style="left:33.0px;top:267.8px;width:52.0px;height:1.0px;background:#c4c4c4;"></div><div class="a" style="left:33.0px;top:270.1px;width:52.0px;height:1.0px;background:#c4c4c4;"></div><div class="a" style="left:33.0px;top:272.4px;width:52.0px;height:1.0px;background:#c4c4c4;"></div><div class="a" style="left:33.0px;top:274.7px;width:31.2px;height:1.0px;background:#c4c4c4;"></div><div class="a" style="left:33.0px;top:277.0px;width:52.0px;height:1.0px;background:#c4c4c4;"></div><div class="a" style="left:33.0px;top:279.3px;width:52.0px;height:1.0px;background:#c4c4c4;"></div><div class="a" style="left:33.0px;top:281.6px;width:52.0px;height:1.0px;background:#c4c4c4;"></div>
<div class="a" style="left:88.0px;top:257.8px;width:19.0px;height:20.0px;background:#3f6070;"></div>
<div class="a" style="left:90.0px;top:259.8px;width:15.0px;height:7.0px;background:#7cc0dc;"></div>
<div class="a" style="left:88.0px;top:270.8px;width:19.0px;height:7.0px;background:#4a4a40;"></div>
<div class="t" style="left:12px;top:307.3px;font-size:8.5px;color:#5a5a5a">3</div>
<svg class="a" style="left:11px;top:316.3px" width="7" height="7" viewBox="0 0 10 10"><path d="M5 0 L6.2 3.6 H10 L7 5.9 L8.1 9.5 L5 7.3 L1.9 9.5 L3 5.9 L0 3.6 H3.8 Z" fill="#6a6a6a"/></svg>
<div class="a" style="left:27px;top:307.3px;width:83px;height:47px;background:#fff;box-shadow:0 0 1px #bdbdbd"></div>
<div class="a" style="left:27.0px;top:307.3px;width:83.0px;height:1.5px;background:#c5c9d6;"></div>
<div class="a" style="left:32.0px;top:311.3px;width:50.0px;height:1.0px;background:#a8a8a8;"></div><div class="a" style="left:32.0px;top:313.4px;width:50.0px;height:1.0px;background:#a8a8a8;"></div><div class="a" style="left:32.0px;top:315.5px;width:50.0px;height:1.0px;background:#a8a8a8;"></div><div class="a" style="left:32.0px;top:317.6px;width:30.0px;height:1.0px;background:#a8a8a8;"></div><div class="a" style="left:32.0px;top:319.7px;width:50.0px;height:1.0px;background:#a8a8a8;"></div><div class="a" style="left:32.0px;top:321.8px;width:50.0px;height:1.0px;background:#a8a8a8;"></div><div class="a" style="left:32.0px;top:323.9px;width:50.0px;height:1.0px;background:#a8a8a8;"></div><div class="a" style="left:32.0px;top:326.0px;width:30.0px;height:1.0px;background:#a8a8a8;"></div><div class="a" style="left:32.0px;top:328.1px;width:50.0px;height:1.0px;background:#a8a8a8;"></div><div class="a" style="left:32.0px;top:330.2px;width:50.0px;height:1.0px;background:#a8a8a8;"></div><div class="a" style="left:32.0px;top:332.3px;width:50.0px;height:1.0px;background:#a8a8a8;"></div><div class="a" style="left:32.0px;top:334.4px;width:30.0px;height:1.0px;background:#a8a8a8;"></div><div class="a" style="left:32.0px;top:336.5px;width:50.0px;height:1.0px;background:#a8a8a8;"></div><div class="a" style="left:32.0px;top:338.6px;width:50.0px;height:1.0px;background:#a8a8a8;"></div><div class="a" style="left:32.0px;top:340.7px;width:50.0px;height:1.0px;background:#a8a8a8;"></div>
<div class="a" style="left:81.0px;top:318.3px;width:25.0px;height:24.0px;background:#d8c8c0;"></div>
<div class="a" style="left:81.0px;top:327.3px;width:8.0px;height:15.0px;background:#b8403a;"></div>
<div class="a" style="left:89.0px;top:325.3px;width:9.0px;height:17.0px;background:#c7806a;"></div>
<div class="a" style="left:98.0px;top:327.3px;width:8.0px;height:15.0px;background:#6a7a8a;"></div>
<div class="a" style="left:83.0px;top:319.3px;width:4.0px;height:3.0px;background:#a22;"></div>
<div class="a" style="left:91.0px;top:319.3px;width:4.0px;height:3.0px;background:#d33;"></div>
<div class="a" style="left:100.0px;top:319.3px;width:4.0px;height:3.0px;background:#eee;"></div>
<div class="a" style="left:99.0px;top:340.3px;width:7.0px;height:2.0px;background:#e8c040;"></div>
<div class="t" style="left:12px;top:368.0px;font-size:8.5px;color:#5a5a5a">4</div>
<svg class="a" style="left:11px;top:377.0px" width="7" height="7" viewBox="0 0 10 10"><path d="M5 0 L6.2 3.6 H10 L7 5.9 L8.1 9.5 L5 7.3 L1.9 9.5 L3 5.9 L0 3.6 H3.8 Z" fill="#6a6a6a"/></svg>
<div class="a" style="left:27px;top:368.0px;width:83px;height:47px;background:#fff;box-shadow:0 0 1px #bdbdbd"></div>
<div class="a" style="left:52.0px;top:368.0px;width:8.0px;height:4.0px;background:#a9b3d8;"></div>
<div class="a" style="left:52.0px;top:400.0px;width:8.0px;height:15.0px;background:#a9b3d8;"></div>
<svg class="a" style="left:35px;top:375.0px" width="30" height="24" viewBox="0 0 30 24"><path d="M2 22 L8 6 L14 22 Z" fill="#e0c8b8"/><circle cx="20" cy="8" r="6" fill="#9cc4c4"/><path d="M10 24 C12 14 20 12 26 16 L28 24 Z" fill="#d09090"/><path d="M4 18 L12 10 L16 20 Z" fill="#c9b090"/></svg>
<div class="a" style="left:64.0px;top:372.0px;width:44.0px;height:1.0px;background:#c8c8c8;"></div><div class="a" style="left:64.0px;top:374.3px;width:44.0px;height:1.0px;background:#c8c8c8;"></div><div class="a" style="left:64.0px;top:376.6px;width:44.0px;height:1.0px;background:#c8c8c8;"></div><div class="a" style="left:64.0px;top:378.9px;width:26.4px;height:1.0px;background:#c8c8c8;"></div><div class="a" style="left:64.0px;top:381.2px;width:44.0px;height:1.0px;background:#c8c8c8;"></div><div class="a" style="left:64.0px;top:383.5px;width:44.0px;height:1.0px;background:#c8c8c8;"></div><div class="a" style="left:64.0px;top:385.8px;width:44.0px;height:1.0px;background:#c8c8c8;"></div><div class="a" style="left:64.0px;top:388.1px;width:26.4px;height:1.0px;background:#c8c8c8;"></div><div class="a" style="left:64.0px;top:390.4px;width:44.0px;height:1.0px;background:#c8c8c8;"></div><div class="a" style="left:64.0px;top:392.7px;width:44.0px;height:1.0px;background:#c8c8c8;"></div><div class="a" style="left:64.0px;top:395.0px;width:44.0px;height:1.0px;background:#c8c8c8;"></div><div class="a" style="left:64.0px;top:397.3px;width:26.4px;height:1.0px;background:#c8c8c8;"></div><div class="a" style="left:64.0px;top:399.6px;width:44.0px;height:1.0px;background:#c8c8c8;"></div><div class="a" style="left:64.0px;top:401.9px;width:44.0px;height:1.0px;background:#c8c8c8;"></div><div class="a" style="left:64.0px;top:404.2px;width:44.0px;height:1.0px;background:#c8c8c8;"></div>
<div class="t" style="left:12px;top:428.7px;font-size:8.5px;color:#5a5a5a">5</div>
<svg class="a" style="left:11px;top:437.7px" width="7" height="7" viewBox="0 0 10 10"><path d="M5 0 L6.2 3.6 H10 L7 5.9 L8.1 9.5 L5 7.3 L1.9 9.5 L3 5.9 L0 3.6 H3.8 Z" fill="#6a6a6a"/></svg>
<div class="a" style="left:27px;top:428.7px;width:83px;height:47px;background:#fff;box-shadow:0 0 1px #bdbdbd"></div>
<div class="a" style="left:31.0px;top:430.7px;width:76.0px;height:5.0px;background:#ededed;"></div>
<div class="a" style="left:61.0px;top:432.7px;width:12.0px;height:1.0px;background:#777;"></div>
<div class="a" style="left:33.0px;top:437.7px;width:72.0px;height:1.0px;background:#bdbdbd;"></div><div class="a" style="left:33.0px;top:439.8px;width:72.0px;height:1.0px;background:#bdbdbd;"></div><div class="a" style="left:33.0px;top:441.9px;width:72.0px;height:1.0px;background:#bdbdbd;"></div><div class="a" style="left:33.0px;top:444.0px;width:43.2px;height:1.0px;background:#bdbdbd;"></div>
<div class="a" style="left:33.0px;top:447.7px;width:72.0px;height:1.0px;background:#bdbdbd;"></div><div class="a" style="left:33.0px;top:449.8px;width:72.0px;height:1.0px;background:#bdbdbd;"></div><div class="a" style="left:33.0px;top:451.9px;width:72.0px;height:1.0px;background:#bdbdbd;"></div><div class="a" style="left:33.0px;top:454.0px;width:43.2px;height:1.0px;background:#bdbdbd;"></div>
<div class="a" style="left:73.0px;top:456.7px;width:23.0px;height:15.0px;background:#5a4a40;"></div>
<div class="a" style="left:79.0px;top:458.7px;width:11.0px;height:8.0px;background:#e8e0d0;"></div>
<div class="a" style="left:74.0px;top:461.7px;width:4.0px;height:9.0px;background:#d0a080;"></div>
<div class="t" style="left:12px;top:489.2px;font-size:8.5px;color:#5a5a5a">6</div>
<svg class="a" style="left:11px;top:498.2px" width="7" height="7" viewBox="0 0 10 10"><path d="M5 0 L6.2 3.6 H10 L7 5.9 L8.1 9.5 L5 7.3 L1.9 9.5 L3 5.9 L0 3.6 H3.8 Z" fill="#6a6a6a"/></svg>
<div class="a" style="left:27px;top:489.2px;width:83px;height:47px;background:#fff;box-shadow:0 0 1px #bdbdbd"></div>
<div class="a" style="left:93.0px;top:489.2px;width:8.0px;height:8.0px;background:#a9b3d8;"></div>
<div class="a" style="left:93.0px;top:529.2px;width:8.0px;height:7.0px;background:#a9b3d8;"></div>
<div class="a" style="left:30.0px;top:492.2px;width:40.0px;height:1.0px;background:#cccccc;"></div><div class="a" style="left:30.0px;top:494.5px;width:40.0px;height:1.0px;background:#cccccc;"></div><div class="a" style="left:30.0px;top:496.8px;width:40.0px;height:1.0px;background:#cccccc;"></div><div class="a" style="left:30.0px;top:499.1px;width:24.0px;height:1.0px;background:#cccccc;"></div><div class="a" style="left:30.0px;top:501.4px;width:40.0px;height:1.0px;background:#cccccc;"></div><div class="a" style="left:30.0px;top:503.7px;width:40.0px;height:1.0px;background:#cccccc;"></div><div class="a" style="left:30.0px;top:506.0px;width:40.0px;height:1.0px;background:#cccccc;"></div><div class="a" style="left:30.0px;top:508.3px;width:24.0px;height:1.0px;background:#cccccc;"></div><div class="a" style="left:30.0px;top:510.6px;width:40.0px;height:1.0px;background:#cccccc;"></div><div class="a" style="left:30.0px;top:512.9px;width:40.0px;height:1.0px;background:#cccccc;"></div><div class="a" style="left:30.0px;top:515.2px;width:40.0px;height:1.0px;background:#cccccc;"></div><div class="a" style="left:30.0px;top:517.5px;width:24.0px;height:1.0px;background:#cccccc;"></div><div class="a" style="left:30.0px;top:519.8px;width:40.0px;height:1.0px;background:#cccccc;"></div><div class="a" style="left:30.0px;top:522.1px;width:40.0px;height:1.0px;background:#cccccc;"></div><div class="a" style="left:30.0px;top:524.4px;width:40.0px;height:1.0px;background:#cccccc;"></div><div class="a" style="left:30.0px;top:526.7px;width:24.0px;height:1.0px;background:#cccccc;"></div><div class="a" style="left:30.0px;top:529.0px;width:40.0px;height:1.0px;background:#cccccc;"></div><div class="a" style="left:30.0px;top:531.3px;width:40.0px;height:1.0px;background:#cccccc;"></div>
<svg class="a" style="left:72px;top:497.2px" width="35" height="32" viewBox="0 0 35 32"><circle cx="18" cy="15" r="12" fill="none" stroke="#9fb8d0" stroke-width="1" stroke-dasharray="2 2"/><rect x="12" y="9" width="12" height="8" fill="#f4ecd0" stroke="#888" stroke-width="0.6"/><rect x="8" y="17" width="4" height="12" fill="#e0a040"/><circle cx="10" cy="15" r="2" fill="#f0c8a0"/><circle cx="6" cy="8" r="2" fill="#e88"/><circle cx="30" cy="9" r="2" fill="#8c8"/><circle cx="30" cy="21" r="2" fill="#88c"/><circle cx="18" cy="3" r="2" fill="#fc6"/><circle cx="22" cy="26" r="2" fill="#6ac"/></svg>
<div class="t" style="left:12px;top:549.7px;font-size:8.5px;color:#5a5a5a">7</div>
<svg class="a" style="left:11px;top:558.7px" width="7" height="7" viewBox="0 0 10 10"><path d="M5 0 L6.2 3.6 H10 L7 5.9 L8.1 9.5 L5 7.3 L1.9 9.5 L3 5.9 L0 3.6 H3.8 Z" fill="#6a6a6a"/></svg>
<div class="a" style="left:27px;top:549.7px;width:83px;height:47px;background:#fff;box-shadow:0 0 1px #bdbdbd"></div>
<div class="a" style="left:101.0px;top:549.7px;width:9.0px;height:47.0px;background:#a9b3d8;"></div>
<div class="a" style="left:32.0px;top:552.7px;width:65.0px;height:1.0px;background:#b5b5b5;"></div><div class="a" style="left:32.0px;top:554.9px;width:65.0px;height:1.0px;background:#b5b5b5;"></div><div class="a" style="left:32.0px;top:557.1px;width:65.0px;height:1.0px;background:#b5b5b5;"></div><div class="a" style="left:32.0px;top:559.3px;width:39.0px;height:1.0px;background:#b5b5b5;"></div><div class="a" style="left:32.0px;top:561.5px;width:65.0px;height:1.0px;background:#b5b5b5;"></div><div class="a" style="left:32.0px;top:563.7px;width:65.0px;height:1.0px;background:#b5b5b5;"></div><div class="a" style="left:32.0px;top:565.9px;width:65.0px;height:1.0px;background:#b5b5b5;"></div><div class="a" style="left:32.0px;top:568.1px;width:39.0px;height:1.0px;background:#b5b5b5;"></div><div class="a" style="left:32.0px;top:570.3px;width:65.0px;height:1.0px;background:#b5b5b5;"></div>
<div class="a" style="left:52.0px;top:571.7px;width:22.0px;height:22.0px;background:#e8d0b0;"></div>
<svg class="a" style="left:52px;top:571.7px" width="22" height="22" viewBox="0 0 22 22"><g fill="none" stroke-width="1.5"><path d="M2 4 C6 8 10 2 14 6 S20 10 20 4" stroke="#6aa6a0"/><path d="M2 12 C6 16 10 10 14 14 S20 18 20 12" stroke="#e08040"/><path d="M2 19 C6 21 12 16 20 20" stroke="#7ab0c0"/></g><circle cx="8" cy="9" r="2" fill="#d86a50"/><circle cx="16" cy="16" r="2" fill="#e0a050"/></svg>
<div class="a" style="left:90px;top:218px;width:126px;height:14px;background:#fff;border:1px solid #cfcfcf"></div>
<div class="t" style="left:92px;top:220.5px;font-size:8.8px;color:#5a5a5a;transform:scaleX(0.87);transform-origin:0 0">Innovations and Challenges in the...</div>
<svg class="a" style="left:90px;top:210px" width="6" height="9" viewBox="0 0 6 9"><path d="M0.5 0.5 V8 L2.2 6.3 L3.5 8.8 L4.5 8.3 L3.3 5.8 H5.8 Z" fill="#fff" stroke="#333" stroke-width="0.6"/></svg>
<div class="a" style="left:136px;top:576px;width:879px;height:22px;background:#e8e8e8;border-top:1px solid #d2d2d2"></div>
<div class="t" style="left:144px;top:583px;font-size:9.6px;color:#5f5f5f">Щелкните, чтобы добавить заметки</div>
<div class="a" style="left:1004px;top:174px;width:10px;height:402px;background:#e2e2e2"></div>
<div class="a" style="left:1004px;top:174px;width:10px;height:10px;background:#fff;border:1px solid #d0d0d0"></div>
<div class="a arr up" style="left:1007px;top:177px"></div>
<div class="a" style="left:1004px;top:184px;width:10px;height:10px;background:#fff;border:1px solid #d0d0d0"></div>
<div class="a" style="left:1004px;top:529px;width:10px;height:10px;background:#fff;border:1px solid #d0d0d0"></div>
<div class="a arr" style="left:1007px;top:533px"></div>
<svg class="a" style="left:1006px;top:542px" width="6" height="26" viewBox="0 0 6 26"><path d="M1 4 L3 2 L5 4 M1 7 L3 5 L5 7 M0.5 8.5 H5.5" stroke="#555" stroke-width="0.8" fill="none"/><path d="M0.5 16.5 H5.5 M1 18 L3 20 L5 18 M1 21 L3 23 L5 21" stroke="#555" stroke-width="0.8" fill="none"/></svg>
<div class="a" style="left:1004px;top:579px;width:10px;height:9px;background:#fff;border:1px solid #d0d0d0"></div>
<div class="a arr up" style="left:1007px;top:582px"></div>
<div class="a" style="left:1004px;top:588px;width:10px;height:9px;background:#fff;border:1px solid #d0d0d0"></div>
<div class="a arr" style="left:1007px;top:591px"></div>
<div class="a" style="left:1017px;top:350px;width:1px;height:16px;background:#aaa"></div>
<div class="a" style="left:1019px;top:350px;width:1px;height:16px;background:#aaa"></div>
<div class="a" style="left:4px;top:598px;width:1011px;height:14px;background:#f1f1f1;border-top:1px solid #d8d8d8"></div>
<div class="t" style="left:9px;top:602px;font-size:7px;color:#555">Слайд 1 из 35</div>
<svg class="a" style="left:65px;top:600px" width="10" height="9" viewBox="0 0 10 9"><rect x="0.5" y="0.5" width="7" height="8" fill="none" stroke="#777" stroke-width="0.8"/><path d="M3 5 L5 7 L9 1" stroke="#777" stroke-width="0.9" fill="none"/></svg>
<div class="t" style="left:85px;top:602px;font-size:7px;color:#555">русский</div>
<svg class="a" style="left:667px;top:600px" width="9" height="9" viewBox="0 0 9 9"><path d="M1 8 H8 M2 6 H7 M4.5 1 L7 4.5 H2 Z" stroke="#666" stroke-width="0.9" fill="#888"/></svg>
<div class="t" style="left:676px;top:602px;font-size:7px;color:#444">Заметки</div>
<svg class="a" style="left:715px;top:600px" width="10" height="9" viewBox="0 0 10 9"><path d="M0.5 0.5 H9.5 V6 H4 L2 8.5 V6 H0.5 Z" fill="#666"/></svg>
<div class="t" style="left:726px;top:602px;font-size:7px;color:#444">Примечания</div>
<div class="a" style="left:778px;top:598px;width:25px;height:14px;background:#d2d2d2"></div>
<svg class="a" style="left:785px;top:601px" width="11" height="8" viewBox="0 0 11 8"><rect x="0.5" y="0.5" width="10" height="7" fill="none" stroke="#777" stroke-width="0.8"/><rect x="2" y="2" width="7" height="3" fill="#999"/></svg>
<svg class="a" style="left:813px;top:601px" width="10" height="8" viewBox="0 0 10 8"><g fill="none" stroke="#777" stroke-width="0.8"><rect x="0.5" y="0.5" width="4" height="3"/><rect x="5.5" y="0.5" width="4" height="3"/><rect x="0.5" y="4.5" width="4" height="3"/><rect x="5.5" y="4.5" width="4" height="3"/></g></svg>
<svg class="a" style="left:839px;top:601px" width="11" height="8" viewBox="0 0 11 8"><g fill="none" stroke="#777" stroke-width="0.8"><rect x="0.5" y="0.5" width="10" height="7"/><path d="M0.5 3 H10.5 M0.5 5.5 H10.5 M4 0.5 V7.5"/></g></svg>
<svg class="a" style="left:865px;top:600px" width="10" height="10" viewBox="0 0 10 10"><g fill="none" stroke="#777" stroke-width="0.8"><rect x="0.5" y="0.5" width="9" height="5"/><path d="M5 5.5 V9 M3 9 H7"/></g></svg>
<div class="a" style="left:887px;top:605px;width:5px;height:1px;background:#666"></div>
<div class="a" style="left:897px;top:605px;width:64px;height:1px;background:#c4c4c4"></div>
<div class="a" style="left:921px;top:601px;width:3px;height:8px;background:#555"></div>
<div class="t" style="left:962px;top:601px;font-size:9px;color:#666">+</div>
<div class="t" style="left:977px;top:602px;font-size:7px;color:#555">82 %</div>
<svg class="a" style="left:1002px;top:600px" width="9" height="9" viewBox="0 0 9 9"><path d="M0.5 3 V0.5 H3 M6 0.5 H8.5 V3 M8.5 6 V8.5 H6 M3 8.5 H0.5 V6 M1 1 L8 8 M8 1 L1 8" stroke="#777" stroke-width="0.8" fill="none"/></svg>
<div class="a" style="left:17px;top:609px;width:21px;height:21px;border-radius:50%;background:#2a2a2a"></div>
<svg class="a" style="left:22px;top:614px" width="11" height="11" viewBox="0 0 11 11"><path d="M2 9 L2.5 6.5 L8 1 L10 3 L4.5 8.5 Z M1 10 H10" stroke="#3bd18a" stroke-width="0.9" fill="none"/></svg><div class="a" style="left:1034px;top:62px;width:235px;height:593.5px;background:#222222;border-radius:6px"></div>
<svg class="a" style="left:1033px;top:62px" width="119" height="67" viewBox="0 0 119 67">
<defs><clipPath id="t0"><rect x="0" y="0" width="119" height="67" rx="4"/></clipPath><filter id="bl" x="-10%" y="-10%" width="120%" height="120%"><feGaussianBlur stdDeviation="0.9"/></filter></defs>
<g clip-path="url(#t0)"><g filter="url(#bl)">
<rect x="-5" y="-5" width="130" height="77" fill="#6e6254"/>
<rect x="-5" y="-5" width="42" height="77" fill="#e6e8ec"/>
<rect x="4" y="0" width="5" height="67" fill="#c9ced4"/><rect x="18" y="0" width="6" height="67" fill="#d3d7dc"/><rect x="30" y="0" width="5" height="67" fill="#cdd1d6"/>
<rect x="37" y="-5" width="9" height="77" fill="#d2c8bc"/>
<rect x="46" y="-5" width="42" height="77" fill="#5e5246"/>
<rect x="88" y="-5" width="18" height="58" fill="#9a6636"/>
<rect x="106" y="-5" width="18" height="77" fill="#b8a894"/>
<rect x="98" y="26" width="26" height="24" fill="#e4e0da"/>
<rect x="86" y="50" width="38" height="22" fill="#8c8474"/>
<path d="M70 5 C52 5 45 20 46 36 C47 48 50 58 54 64 H90 C95 56 97 44 95 30 C92 14 84 5 70 5 Z" fill="#d9ceb6"/>
<ellipse cx="71" cy="38" rx="13" ry="17" fill="#e3bca6"/>
<path d="M56 30 C56 16 64 10 72 10 C82 10 88 18 86 30 C80 22 66 20 56 30 Z" fill="#e2d8c2"/>
<path d="M64 35 H68 M74 35 H78" stroke="#5a4038" stroke-width="1.3"/>
<path d="M67 47 H75" stroke="#a85a5a" stroke-width="1.4"/>
<path d="M38 72 C42 60 56 55 71 56 C86 55 98 60 104 72 Z" fill="#4e4a3c"/>
<path d="M52 62 L58 70 M66 58 L72 70 M82 60 L86 70 M92 62 L98 70 M46 68 L50 72" stroke="#d8ccb0" stroke-width="2.4"/>
</g></g>
<rect x="1" y="1" width="117" height="65" rx="4" fill="none" stroke="#3fe59a" stroke-width="2"/>
</svg>
<div class="a" style="left:1036px;top:114px;width:52px;height:12px;background:rgba(28,28,28,.62);border-radius:2px"></div><div class="t" style="left:1039px;top:116.3px;font-size:8.4px;color:#e8e8e8">Alex Popova</div>
<svg class="a" style="left:1184px;top:70px" width="52" height="52" viewBox="0 0 52 52">
<defs><clipPath id="a1"><rect width="52" height="52" rx="5"/></clipPath></defs><g clip-path="url(#a1)"><g filter="url(#bl)">
<rect x="-4" y="-4" width="60" height="60" fill="#d9d9d9"/>
<path d="M4 56 V18 C4 6 14 2 26 2 C38 2 48 6 48 18 V56 Z" fill="#6d6b69"/>
<path d="M14 8 C8 16 10 32 12 46 L38 46 C40 32 40 16 36 8 C32 2 20 2 14 8 Z" fill="#d4b47c"/>
<ellipse cx="25" cy="19" rx="7" ry="9" fill="#e6bca4"/>
<path d="M2 56 C4 42 12 34 25 34 C38 34 46 42 50 56 Z" fill="#c4e2e4"/>
<path d="M14 22 C12 32 14 42 17 48 L21 48 L19 26 Z M35 22 C37 32 35 42 32 48 L28 48 L31 26 Z" fill="#caa46a"/>
</g></g></svg>
<div class="a" style="left:1154px;top:114px;width:72px;height:12px;background:rgba(28,28,28,.62);border-radius:2px"></div><svg class="a" style="left:1156px;top:115px" width="10" height="10" viewBox="0 0 10 10"><path d="M4 1.2 C5 0.6 6.4 1 6.6 2.2 L7 5 C7.1 6.2 6 7 5 6.8 C4 6.7 3.4 6 3.3 5 L3 2.5 C2.9 1.9 3.3 1.4 4 1.2 Z" fill="#e2334f"/><path d="M2 5.5 C2.3 7.6 4 8.6 5.4 8.4 M4.8 8.4 L5 10 M3 10 H6.5" stroke="#e2334f" stroke-width="0.9" fill="none"/><path d="M1.2 9.2 L8.6 1" stroke="#e2334f" stroke-width="1.1"/></svg><div class="t" style="left:1168px;top:116.3px;font-size:8.4px;color:#e8e8e8">Aleksa Morhun</div>
<svg class="a" style="left:1034px;top:128px" width="117" height="66" viewBox="0 0 117 66">
<defs><clipPath id="t2"><rect width="117" height="66"/></clipPath></defs><g clip-path="url(#t2)"><g filter="url(#bl)">
<rect x="-5" y="-5" width="127" height="76" fill="#f4f4f6"/>
<rect x="86" y="40" width="36" height="30" fill="#dcdcde"/>
<path d="M24 72 C28 52 40 44 60 44 C80 44 96 54 102 72 Z" fill="#d9a4a4"/>
<path d="M40 52 C34 30 40 6 60 6 C80 6 86 30 82 52 L72 54 L50 54 Z" fill="#2c2422"/>
<ellipse cx="61" cy="30" rx="12" ry="16" fill="#dfbca8"/>
<path d="M48 22 C50 12 56 10 62 10 C70 10 75 14 75 22 C68 16 56 16 48 22 Z" fill="#2c2422"/>
<path d="M56 28 H59 M64 28 H67" stroke="#6a5048" stroke-width="1"/>
</g></g></svg>
<div class="a" style="left:1036px;top:181px;width:70px;height:12px;background:rgba(28,28,28,.62);border-radius:2px"></div><svg class="a" style="left:1038px;top:182px" width="10" height="10" viewBox="0 0 10 10"><path d="M4 1.2 C5 0.6 6.4 1 6.6 2.2 L7 5 C7.1 6.2 6 7 5 6.8 C4 6.7 3.4 6 3.3 5 L3 2.5 C2.9 1.9 3.3 1.4 4 1.2 Z" fill="#e2334f"/><path d="M2 5.5 C2.3 7.6 4 8.6 5.4 8.4 M4.8 8.4 L5 10 M3 10 H6.5" stroke="#e2334f" stroke-width="0.9" fill="none"/><path d="M1.2 9.2 L8.6 1" stroke="#e2334f" stroke-width="1.1"/></svg><div class="t" style="left:1050px;top:183.3px;font-size:8.4px;color:#e8e8e8">박안토니나UA</div>
<div class="a" style="left:1184px;top:136px;width:52px;height:52px;background:#1683d8;border-radius:5px"></div>
<div class="t" style="left:1184px;top:148px;width:52px;text-align:center;font-size:29px;color:#fff">P</div>
<div class="a" style="left:1154px;top:181px;width:69px;height:12px;background:rgba(28,28,28,.62);border-radius:2px"></div><svg class="a" style="left:1156px;top:182px" width="10" height="10" viewBox="0 0 10 10"><path d="M4 1.2 C5 0.6 6.4 1 6.6 2.2 L7 5 C7.1 6.2 6 7 5 6.8 C4 6.7 3.4 6 3.3 5 L3 2.5 C2.9 1.9 3.3 1.4 4 1.2 Z" fill="#e2334f"/><path d="M2 5.5 C2.3 7.6 4 8.6 5.4 8.4 M4.8 8.4 L5 10 M3 10 H6.5" stroke="#e2334f" stroke-width="0.9" fill="none"/><path d="M1.2 9.2 L8.6 1" stroke="#e2334f" stroke-width="1.1"/></svg><div class="t" style="left:1168px;top:183.3px;font-size:8.4px;color:#e8e8e8">Руслан Бабур</div>
<svg class="a" style="left:1034px;top:194px" width="117" height="66" viewBox="0 0 117 66">
<defs><clipPath id="t4"><rect width="117" height="66"/></clipPath></defs><g clip-path="url(#t4)"><g filter="url(#bl)">
<rect x="-5" y="-5" width="127" height="76" fill="#d3c9ae"/>
<rect x="-5" y="30" width="10" height="22" fill="#1e1e1e"/>
<rect x="15" y="19" width="23" height="48" fill="#e6e0d0"/>
<rect x="17" y="22" width="19" height="14" fill="#6a3a2a"/><rect x="17" y="38" width="19" height="14" fill="#3a2a22"/><rect x="17" y="54" width="19" height="12" fill="#4a3a2a"/>
<rect x="46" y="20" width="10" height="36" fill="#5a3a2e"/>
<rect x="84" y="-5" width="18" height="76" fill="#eceeee"/>
<rect x="102" y="-5" width="20" height="76" fill="#b9bcb0"/>
<path d="M50 72 C50 58 56 52 70 52 C84 52 90 60 90 72 Z" fill="#3a302c"/>
<ellipse cx="69" cy="44" rx="14" ry="16" fill="#b48c7a"/>
<path d="M52 40 C50 26 60 20 70 20 C82 20 90 28 88 42 C82 32 66 30 54 40 Z" fill="#2e2622"/>
<path d="M62 44 H66 M72 44 H76" stroke="#3a2a2a" stroke-width="1.4"/>
</g></g></svg>
<div class="a" style="left:1036px;top:247px;width:90px;height:12px;background:rgba(28,28,28,.62);border-radius:2px"></div><svg class="a" style="left:1038px;top:248px" width="10" height="10" viewBox="0 0 10 10"><path d="M4 1.2 C5 0.6 6.4 1 6.6 2.2 L7 5 C7.1 6.2 6 7 5 6.8 C4 6.7 3.4 6 3.3 5 L3 2.5 C2.9 1.9 3.3 1.4 4 1.2 Z" fill="#e2334f"/><path d="M2 5.5 C2.3 7.6 4 8.6 5.4 8.4 M4.8 8.4 L5 10 M3 10 H6.5" stroke="#e2334f" stroke-width="0.9" fill="none"/><path d="M1.2 9.2 L8.6 1" stroke="#e2334f" stroke-width="1.1"/></svg><div class="t" style="left:1050px;top:249.3px;font-size:8.4px;color:#e8e8e8">Dombrovska Sofiia</div>
<svg class="a" style="left:1151px;top:194px" width="118" height="66" viewBox="0 0 118 66">
<defs><linearGradient id="pg" x1="0" y1="0" x2="0" y2="1"><stop offset="0" stop-color="#fbfaf6"/><stop offset="0.5" stop-color="#f6f0dc"/><stop offset="1" stop-color="#eedfa6"/></linearGradient><clipPath id="t5"><rect width="118" height="66" rx="4"/></clipPath></defs>
<g clip-path="url(#t5)"><g filter="url(#bl)">
<rect x="-5" y="-5" width="128" height="76" fill="url(#pg)"/>
<ellipse cx="58" cy="4" rx="6" ry="6" fill="#b08850"/>
<rect x="38" y="16" width="30" height="1.5" fill="#6a5a40"/><rect x="22" y="21" width="50" height="1.5" fill="#6a5a40"/><rect x="10" y="26" width="62" height="1.5" fill="#6a5a40"/>
<path d="M40 72 C44 56 56 48 74 48 C84 48 90 54 92 72 Z" fill="#2c2a2a"/>
<path d="M70 30 C66 10 78 0 96 0 C112 0 122 6 122 20 V72 H80 C74 60 72 46 70 30 Z" fill="#d6cfc0"/>
<path d="M76 28 C76 12 86 6 100 6 C114 6 122 14 122 28 V60 C112 64 92 64 82 56 C78 48 76 38 76 28 Z" fill="#e2c6be"/>
<rect x="78" y="20" width="18" height="9" rx="4" fill="none" stroke="#5a3434" stroke-width="1.8"/><rect x="100" y="20" width="18" height="9" rx="4" fill="none" stroke="#5a3434" stroke-width="1.8"/>
<path d="M96 50 H110" stroke="#b88080" stroke-width="1.4"/>
</g></g></svg>
<div class="a" style="left:1154px;top:247px;width:112px;height:12px;background:rgba(28,28,28,.62);border-radius:2px"></div><svg class="a" style="left:1156px;top:248px" width="10" height="10" viewBox="0 0 10 10"><path d="M4 1.2 C5 0.6 6.4 1 6.6 2.2 L7 5 C7.1 6.2 6 7 5 6.8 C4 6.7 3.4 6 3.3 5 L3 2.5 C2.9 1.9 3.3 1.4 4 1.2 Z" fill="#e2334f"/><path d="M2 5.5 C2.3 7.6 4 8.6 5.4 8.4 M4.8 8.4 L5 10 M3 10 H6.5" stroke="#e2334f" stroke-width="0.9" fill="none"/><path d="M1.2 9.2 L8.6 1" stroke="#e2334f" stroke-width="1.1"/></svg><div class="t" style="left:1168px;top:249.3px;font-size:8.4px;color:#e8e8e8">Наталія Башавець (вик...</div>
<svg class="a" style="left:1066px;top:267px" width="52" height="52" viewBox="0 0 52 52">
<defs><clipPath id="dg"><rect width="52" height="52" rx="5"/></clipPath></defs><g clip-path="url(#dg)"><g filter="url(#bl)">
<rect x="-4" y="-4" width="60" height="60" fill="#3a2e26"/>
<rect x="-4" y="-4" width="60" height="14" fill="#b89470"/>
<path d="M-4 56 V14 L6 2 L18 12 C24 8 30 8 36 12 L46 2 L56 14 V56 Z" fill="#caa06a"/>
<ellipse cx="26" cy="30" rx="22" ry="20" fill="#d6ae74"/>
<path d="M8 22 C16 14 22 18 26 24 C30 18 36 14 44 22 L42 30 L10 30 Z" fill="#e4c28c"/>
<ellipse cx="26" cy="44" rx="5" ry="3.5" fill="#4a362a"/>
<path d="M15 32 H22 M30 32 H37" stroke="#6a5036" stroke-width="1.5"/>
<path d="M30 46 V56 M20 46 L16 56" stroke="#a88050" stroke-width="2"/>
</g></g></svg>
<div class="a" style="left:1036px;top:313px;width:103px;height:12px;background:rgba(28,28,28,.62);border-radius:2px"></div><svg class="a" style="left:1038px;top:314px" width="10" height="10" viewBox="0 0 10 10"><path d="M4 1.2 C5 0.6 6.4 1 6.6 2.2 L7 5 C7.1 6.2 6 7 5 6.8 C4 6.7 3.4 6 3.3 5 L3 2.5 C2.9 1.9 3.3 1.4 4 1.2 Z" fill="#e2334f"/><path d="M2 5.5 C2.3 7.6 4 8.6 5.4 8.4 M4.8 8.4 L5 10 M3 10 H6.5" stroke="#e2334f" stroke-width="0.9" fill="none"/><path d="M1.2 9.2 L8.6 1" stroke="#e2334f" stroke-width="1.1"/></svg><div class="t" style="left:1050px;top:315.3px;font-size:8.4px;color:#e8e8e8">Виктория Беляевская</div>
<div class="nm" style="left:1152.5px;top:287.7px">Gridasova</div>
<div class="a" style="left:1154px;top:313px;width:57px;height:12px;background:rgba(28,28,28,.62);border-radius:2px"></div><svg class="a" style="left:1156px;top:314px" width="10" height="10" viewBox="0 0 10 10"><path d="M4 1.2 C5 0.6 6.4 1 6.6 2.2 L7 5 C7.1 6.2 6 7 5 6.8 C4 6.7 3.4 6 3.3 5 L3 2.5 C2.9 1.9 3.3 1.4 4 1.2 Z" fill="#e2334f"/><path d="M2 5.5 C2.3 7.6 4 8.6 5.4 8.4 M4.8 8.4 L5 10 M3 10 H6.5" stroke="#e2334f" stroke-width="0.9" fill="none"/><path d="M1.2 9.2 L8.6 1" stroke="#e2334f" stroke-width="1.1"/></svg><div class="t" style="left:1168px;top:315.3px;font-size:8.4px;color:#e8e8e8">Gridasova</div>
<div class="nm" style="left:1034.0px;top:353.6px">Анна</div>
<div class="a" style="left:1036px;top:379px;width:38px;height:12px;background:rgba(28,28,28,.62);border-radius:2px"></div><svg class="a" style="left:1038px;top:380px" width="10" height="10" viewBox="0 0 10 10"><path d="M4 1.2 C5 0.6 6.4 1 6.6 2.2 L7 5 C7.1 6.2 6 7 5 6.8 C4 6.7 3.4 6 3.3 5 L3 2.5 C2.9 1.9 3.3 1.4 4 1.2 Z" fill="#e2334f"/><path d="M2 5.5 C2.3 7.6 4 8.6 5.4 8.4 M4.8 8.4 L5 10 M3 10 H6.5" stroke="#e2334f" stroke-width="0.9" fill="none"/><path d="M1.2 9.2 L8.6 1" stroke="#e2334f" stroke-width="1.1"/></svg><div class="t" style="left:1050px;top:381.3px;font-size:8.4px;color:#e8e8e8">Анна</div>
<div class="nm" style="left:1152.5px;top:353.6px;word-spacing:2px">Аліна&nbsp; Мефодьє...</div>
<div class="a" style="left:1154px;top:379px;width:79px;height:12px;background:rgba(28,28,28,.62);border-radius:2px"></div><svg class="a" style="left:1156px;top:380px" width="10" height="10" viewBox="0 0 10 10"><path d="M4 1.2 C5 0.6 6.4 1 6.6 2.2 L7 5 C7.1 6.2 6 7 5 6.8 C4 6.7 3.4 6 3.3 5 L3 2.5 C2.9 1.9 3.3 1.4 4 1.2 Z" fill="#e2334f"/><path d="M2 5.5 C2.3 7.6 4 8.6 5.4 8.4 M4.8 8.4 L5 10 M3 10 H6.5" stroke="#e2334f" stroke-width="0.9" fill="none"/><path d="M1.2 9.2 L8.6 1" stroke="#e2334f" stroke-width="1.1"/></svg><div class="t" style="left:1168px;top:381.3px;font-size:8.4px;color:#e8e8e8">Аліна Мефодьєва</div>
<div class="nm" style="left:1034.0px;top:419.5px">Savkina&nbsp; Yelyzav...</div>
<div class="a" style="left:1036px;top:445px;width:82px;height:12px;background:rgba(28,28,28,.62);border-radius:2px"></div><svg class="a" style="left:1038px;top:446px" width="10" height="10" viewBox="0 0 10 10"><path d="M4 1.2 C5 0.6 6.4 1 6.6 2.2 L7 5 C7.1 6.2 6 7 5 6.8 C4 6.7 3.4 6 3.3 5 L3 2.5 C2.9 1.9 3.3 1.4 4 1.2 Z" fill="#e2334f"/><path d="M2 5.5 C2.3 7.6 4 8.6 5.4 8.4 M4.8 8.4 L5 10 M3 10 H6.5" stroke="#e2334f" stroke-width="0.9" fill="none"/><path d="M1.2 9.2 L8.6 1" stroke="#e2334f" stroke-width="1.1"/></svg><div class="t" style="left:1050px;top:447.3px;font-size:8.4px;color:#e8e8e8">Savkina Yelyzaveta</div>
<div class="a" style="left:1184px;top:400px;width:52px;height:52px;background:#ea3f79;border-radius:5px"></div>
<div class="t" style="left:1184px;top:411px;width:52px;text-align:center;font-size:29px;color:#fff">C</div>
<div class="a" style="left:1154px;top:445px;width:88px;height:12px;background:rgba(28,28,28,.62);border-radius:2px"></div><svg class="a" style="left:1156px;top:446px" width="10" height="10" viewBox="0 0 10 10"><path d="M4 1.2 C5 0.6 6.4 1 6.6 2.2 L7 5 C7.1 6.2 6 7 5 6.8 C4 6.7 3.4 6 3.3 5 L3 2.5 C2.9 1.9 3.3 1.4 4 1.2 Z" fill="#e2334f"/><path d="M2 5.5 C2.3 7.6 4 8.6 5.4 8.4 M4.8 8.4 L5 10 M3 10 H6.5" stroke="#e2334f" stroke-width="0.9" fill="none"/><path d="M1.2 9.2 L8.6 1" stroke="#e2334f" stroke-width="1.1"/></svg><div class="t" style="left:1168px;top:447.3px;font-size:8.4px;color:#e8e8e8">Олександра Кодлова</div>
<div class="nm" style="left:1034.0px;top:485.4px">Veronika&nbsp; Fedoro...</div>
<div class="a" style="left:1036px;top:511px;width:86px;height:12px;background:rgba(28,28,28,.62);border-radius:2px"></div><svg class="a" style="left:1038px;top:512px" width="10" height="10" viewBox="0 0 10 10"><path d="M4 1.2 C5 0.6 6.4 1 6.6 2.2 L7 5 C7.1 6.2 6 7 5 6.8 C4 6.7 3.4 6 3.3 5 L3 2.5 C2.9 1.9 3.3 1.4 4 1.2 Z" fill="#e2334f"/><path d="M2 5.5 C2.3 7.6 4 8.6 5.4 8.4 M4.8 8.4 L5 10 M3 10 H6.5" stroke="#e2334f" stroke-width="0.9" fill="none"/><path d="M1.2 9.2 L8.6 1" stroke="#e2334f" stroke-width="1.1"/></svg><div class="t" style="left:1050px;top:513.3px;font-size:8.4px;color:#e8e8e8">Veronika Fedorova</div>
<div class="nm" style="left:1152.5px;top:485.4px">Iryna Popova</div>
<div class="a" style="left:1154px;top:511px;width:58px;height:12px;background:rgba(28,28,28,.62);border-radius:2px"></div><svg class="a" style="left:1156px;top:512px" width="10" height="10" viewBox="0 0 10 10"><path d="M4 1.2 C5 0.6 6.4 1 6.6 2.2 L7 5 C7.1 6.2 6 7 5 6.8 C4 6.7 3.4 6 3.3 5 L3 2.5 C2.9 1.9 3.3 1.4 4 1.2 Z" fill="#e2334f"/><path d="M2 5.5 C2.3 7.6 4 8.6 5.4 8.4 M4.8 8.4 L5 10 M3 10 H6.5" stroke="#e2334f" stroke-width="0.9" fill="none"/><path d="M1.2 9.2 L8.6 1" stroke="#e2334f" stroke-width="1.1"/></svg><div class="t" style="left:1168px;top:513.3px;font-size:8.4px;color:#e8e8e8">Iryna Popova</div>
<svg class="a" style="left:1066px;top:531px" width="52" height="52" viewBox="0 0 52 52">
<defs><clipPath id="g7"><rect width="52" height="52" rx="5"/></clipPath></defs><g clip-path="url(#g7)"><g filter="url(#bl)">
<rect x="-4" y="-4" width="60" height="60" fill="#c9cec8"/>
<rect x="-4" y="14" width="16" height="30" fill="#8a9a80"/><rect x="36" y="6" width="20" height="34" fill="#aab4a8"/>
<rect x="-4" y="-4" width="60" height="12" fill="#e2e6e8"/>
<path d="M10 48 C8 26 14 6 26 6 C40 6 44 26 42 48 Z" fill="#b98258"/>
<ellipse cx="27" cy="22" rx="8" ry="10" fill="#e9c0a8"/>
<path d="M2 56 C6 42 16 36 27 36 C40 36 46 42 50 56 Z" fill="#d8464a"/>
</g></g></svg>
<div class="a" style="left:1036px;top:577px;width:86px;height:12px;background:rgba(28,28,28,.62);border-radius:2px"></div><svg class="a" style="left:1038px;top:578px" width="10" height="10" viewBox="0 0 10 10"><path d="M4 1.2 C5 0.6 6.4 1 6.6 2.2 L7 5 C7.1 6.2 6 7 5 6.8 C4 6.7 3.4 6 3.3 5 L3 2.5 C2.9 1.9 3.3 1.4 4 1.2 Z" fill="#e2334f"/><path d="M2 5.5 C2.3 7.6 4 8.6 5.4 8.4 M4.8 8.4 L5 10 M3 10 H6.5" stroke="#e2334f" stroke-width="0.9" fill="none"/><path d="M1.2 9.2 L8.6 1" stroke="#e2334f" stroke-width="1.1"/></svg><div class="t" style="left:1050px;top:579.3px;font-size:8.4px;color:#e8e8e8">Алина Пономарева</div>
<svg class="a" style="left:1184px;top:531px" width="52" height="52" viewBox="0 0 52 52">
<defs><clipPath id="g8"><rect width="52" height="52" rx="5"/></clipPath></defs><g clip-path="url(#g8)"><g filter="url(#bl)">
<rect x="-4" y="-4" width="60" height="60" fill="#b4a690"/>
<rect x="36" y="-4" width="20" height="60" fill="#c2b6a4"/>
<path d="M10 56 C6 30 12 10 26 8 C40 8 44 28 44 56 Z" fill="#8a5846"/>
<ellipse cx="27" cy="26" rx="9" ry="11" fill="#dcbcaa"/>
<rect x="13" y="14" width="10" height="17" rx="2" fill="#8fa4e0"/>
<path d="M14 30 C16 36 22 40 24 46" stroke="#dcbcaa" stroke-width="4" fill="none"/>
<path d="M4 56 C8 46 18 42 26 42 C36 42 44 46 48 56 Z" fill="#3a3430"/>
<path d="M38 40 L50 36 L54 56 H42 Z" fill="#e8e4de"/>
</g></g></svg>
<div class="a" style="left:1154px;top:577px;width:81px;height:12px;background:rgba(28,28,28,.62);border-radius:2px"></div><svg class="a" style="left:1156px;top:578px" width="10" height="10" viewBox="0 0 10 10"><path d="M4 1.2 C5 0.6 6.4 1 6.6 2.2 L7 5 C7.1 6.2 6 7 5 6.8 C4 6.7 3.4 6 3.3 5 L3 2.5 C2.9 1.9 3.3 1.4 4 1.2 Z" fill="#e2334f"/><path d="M2 5.5 C2.3 7.6 4 8.6 5.4 8.4 M4.8 8.4 L5 10 M3 10 H6.5" stroke="#e2334f" stroke-width="0.9" fill="none"/><path d="M1.2 9.2 L8.6 1" stroke="#e2334f" stroke-width="1.1"/></svg><div class="t" style="left:1168px;top:579.3px;font-size:8.4px;color:#e8e8e8">Юліана Микитюк</div>
<div class="nm" style="left:1034.0px;top:617.2px">Kristina&nbsp; Vechto...</div>
<div class="a" style="left:1036px;top:643px;width:98px;height:12px;background:rgba(28,28,28,.62);border-radius:2px"></div><svg class="a" style="left:1038px;top:644px" width="10" height="10" viewBox="0 0 10 10"><path d="M4 1.2 C5 0.6 6.4 1 6.6 2.2 L7 5 C7.1 6.2 6 7 5 6.8 C4 6.7 3.4 6 3.3 5 L3 2.5 C2.9 1.9 3.3 1.4 4 1.2 Z" fill="#e2334f"/><path d="M2 5.5 C2.3 7.6 4 8.6 5.4 8.4 M4.8 8.4 L5 10 M3 10 H6.5" stroke="#e2334f" stroke-width="0.9" fill="none"/><path d="M1.2 9.2 L8.6 1" stroke="#e2334f" stroke-width="1.1"/></svg><div class="t" style="left:1050px;top:645.3px;font-size:8.4px;color:#e8e8e8">Kristina Vechtomova</div>
<div class="nm" style="left:1152.5px;top:617.2px">Станіслава&nbsp; Діхт...</div>
<div class="a" style="left:1154px;top:643px;width:110px;height:12px;background:rgba(28,28,28,.62);border-radius:2px"></div><svg class="a" style="left:1156px;top:644px" width="10" height="10" viewBox="0 0 10 10"><path d="M4 1.2 C5 0.6 6.4 1 6.6 2.2 L7 5 C7.1 6.2 6 7 5 6.8 C4 6.7 3.4 6 3.3 5 L3 2.5 C2.9 1.9 3.3 1.4 4 1.2 Z" fill="#e2334f"/><path d="M2 5.5 C2.3 7.6 4 8.6 5.4 8.4 M4.8 8.4 L5 10 M3 10 H6.5" stroke="#e2334f" stroke-width="0.9" fill="none"/><path d="M1.2 9.2 L8.6 1" stroke="#e2334f" stroke-width="1.1"/></svg><div class="t" style="left:1168px;top:645.3px;font-size:8.4px;color:#e8e8e8">Станіслава Діхтяренко</div>
<svg class="a" style="left:1146px;top:663px" width="11" height="7" viewBox="0 0 11 7"><path d="M1 1 L5.5 5.5 L10 1" stroke="#bdbdbd" stroke-width="1.4" fill="none"/></svg><div class="a" style="left:0;top:681px;width:1280px;height:33px;background:#000"></div>
<svg class="a" style="left:26px;top:686px" width="18" height="18" viewBox="0 0 18 18"><rect x="6.5" y="1.5" width="5" height="9" rx="2.5" fill="none" stroke="#dcdcdc" stroke-width="1.2"/><path d="M4 8 C4 11 6 13 9 13 C12 13 14 11 14 8 M9 13 V16.5 M6 16.5 H12" stroke="#dcdcdc" stroke-width="1.2" fill="none"/><path d="M1.5 17 L16.5 1.5" stroke="#e8334f" stroke-width="1.6"/></svg>
<div class="t" style="left:-25.5px;width:120px;text-align:center;top:706.5px;font-size:8.3px;color:#cfcfcf">Звук</div>
<svg class="a" style="left:53px;top:692px" width="6" height="5" viewBox="0 0 6 5"><path d="M0.8 3.8 L3 1.4 L5.2 3.8" stroke="#cfcfcf" stroke-width="1" fill="none"/></svg>
<svg class="a" style="left:87px;top:687px" width="19" height="16" viewBox="0 0 19 16"><rect x="1" y="4" width="11" height="9" rx="1" fill="none" stroke="#dcdcdc" stroke-width="1.2"/><path d="M12 7 L17.5 4 V13 L12 10" fill="none" stroke="#dcdcdc" stroke-width="1.2"/><path d="M1 15.5 L16 1" stroke="#e8334f" stroke-width="1.6"/></svg>
<div class="t" style="left:37px;width:120px;text-align:center;top:706.5px;font-size:7.7px;color:#cfcfcf">Видео</div>
<svg class="a" style="left:118px;top:692px" width="6" height="5" viewBox="0 0 6 5"><path d="M0.8 3.8 L3 1.4 L5.2 3.8" stroke="#cfcfcf" stroke-width="1" fill="none"/></svg>
<svg class="a" style="left:421px;top:688px" width="16" height="15" viewBox="0 0 16 15"><circle cx="5" cy="4" r="2.6" fill="none" stroke="#dcdcdc" stroke-width="1.1"/><path d="M1 13.5 V11 C1 9 2.5 8 5 8 C7.5 8 9 9 9 11 V13.5 Z" fill="none" stroke="#dcdcdc" stroke-width="1.1"/><circle cx="11" cy="5" r="2.2" fill="none" stroke="#dcdcdc" stroke-width="1.1"/><path d="M10 13.5 H15 V11.5 C15 10 13.5 9 11.5 9" fill="none" stroke="#dcdcdc" stroke-width="1.1"/></svg>
<div class="t" style="left:440px;top:690px;font-size:8px;color:#cfcfcf">66</div>
<div class="t" style="left:369px;width:120px;text-align:center;top:706.5px;font-size:8.1px;color:#cfcfcf">Участники</div>
<svg class="a" style="left:461px;top:692px" width="6" height="5" viewBox="0 0 6 5"><path d="M0.8 3.8 L3 1.4 L5.2 3.8" stroke="#cfcfcf" stroke-width="1" fill="none"/></svg>
<svg class="a" style="left:493px;top:687px" width="18" height="17" viewBox="0 0 18 17"><path d="M2 9 C2 5 5 3 8.5 3 C12 3 15 5 15 9 C15 12.5 12 14.5 8.5 14.5 C7.5 14.5 6.5 14.3 5.6 14 L2.5 15.5 L3.2 12.5 C2.4 11.5 2 10.3 2 9 Z" fill="none" stroke="#dcdcdc" stroke-width="1.2"/><path d="M6 1.5 C9 0.5 15 1 16.5 5 C17.2 7 17 9 16 10.5" fill="none" stroke="#dcdcdc" stroke-width="1.1"/><circle cx="6" cy="9" r="0.9" fill="#dcdcdc"/><circle cx="8.5" cy="9" r="0.9" fill="#dcdcdc"/><circle cx="11" cy="9" r="0.9" fill="#dcdcdc"/></svg>
<div class="t" style="left:442.5px;width:120px;text-align:center;top:706.5px;font-size:8.1px;color:#cfcfcf">Чат</div>
<svg class="a" style="left:521px;top:692px" width="6" height="5" viewBox="0 0 6 5"><path d="M0.8 3.8 L3 1.4 L5.2 3.8" stroke="#cfcfcf" stroke-width="1" fill="none"/></svg>
<svg class="a" style="left:556px;top:688px" width="18" height="15" viewBox="0 0 18 15"><path d="M9 14 C4 10.5 1 8 1 4.8 C1 2.5 2.8 1 4.8 1 C6.5 1 8 2 9 3.5 C10 2 11.5 1 13.2 1 C15.2 1 17 2.5 17 4.8 C17 8 14 10.5 9 14 Z" fill="none" stroke="#dcdcdc" stroke-width="1.2"/></svg>
<div class="t" style="left:506px;width:120px;text-align:center;top:706.5px;font-size:8.1px;color:#cfcfcf">Отреагировать</div>
<svg class="a" style="left:587px;top:692px" width="6" height="5" viewBox="0 0 6 5"><path d="M0.8 3.8 L3 1.4 L5.2 3.8" stroke="#cfcfcf" stroke-width="1" fill="none"/></svg>
<div class="a" style="left:623px;top:689.5px;width:17px;height:12.5px;background:#1fd07a;border-radius:2.5px"></div>
<svg class="a" style="left:626px;top:690px" width="11" height="11" viewBox="0 0 11 11"><path d="M5.5 9 V3 M2.5 5.5 L5.5 2.5 L8.5 5.5" stroke="#0a0a0a" stroke-width="1.6" fill="none"/></svg>
<div class="t" style="left:571.7px;width:120px;text-align:center;top:706.5px;font-size:8.1px;color:#cfcfcf">Поделиться</div>
<svg class="a" style="left:653px;top:692px" width="6" height="5" viewBox="0 0 6 5"><path d="M0.8 3.8 L3 1.4 L5.2 3.8" stroke="#cfcfcf" stroke-width="1" fill="none"/></svg>
<svg class="a" style="left:713px;top:687px" width="15" height="16" viewBox="0 0 15 16"><path d="M7.5 1 L13.5 3 V8 C13.5 11.5 11 14 7.5 15 C4 14 1.5 11.5 1.5 8 V3 Z" fill="none" stroke="#dcdcdc" stroke-width="1.2"/><path d="M7.5 3 V13 C9.8 12.2 11.5 10.5 11.8 8 H3.2 V4.5 L7.5 3 Z" fill="#dcdcdc"/></svg>
<div class="t" style="left:661.5px;width:120px;text-align:center;top:706.5px;font-size:8.1px;color:#cfcfcf">Инструменты организатора</div>
<svg class="a" style="left:799px;top:687px" width="17" height="17" viewBox="0 0 17 17"><path d="M1.6 7 V5 C1.6 3 3 1.6 5 1.6 H7" stroke="#dcdcdc" stroke-width="1.2" fill="none"/><path d="M15.4 10 V12 C15.4 14 14 15.4 12 15.4 H10" stroke="#dcdcdc" stroke-width="1.2" fill="none"/><circle cx="12" cy="5" r="2.8" fill="none" stroke="#dcdcdc" stroke-width="1.2"/><circle cx="5" cy="12" r="2.8" fill="none" stroke="#dcdcdc" stroke-width="1.2"/></svg>
<div class="t" style="left:747.5px;width:120px;text-align:center;top:706.5px;font-size:8.3px;color:#cfcfcf">Приложения</div>
<svg class="a" style="left:826px;top:692px" width="6" height="5" viewBox="0 0 6 5"><path d="M0.8 3.8 L3 1.4 L5.2 3.8" stroke="#cfcfcf" stroke-width="1" fill="none"/></svg>
<svg class="a" style="left:855px;top:687px" width="18" height="18" viewBox="0 0 18 18"><circle cx="9" cy="9" r="7.6" fill="none" stroke="#dcdcdc" stroke-width="1.3"/><circle cx="9" cy="9" r="3.4" fill="#f0f0f0"/></svg>
<div class="t" style="left:803.4px;width:120px;text-align:center;top:706.5px;font-size:8.1px;color:#cfcfcf">Запись</div>
<svg class="a" style="left:916px;top:687px" width="18" height="18" viewBox="0 0 18 18"><circle cx="9" cy="9" r="7.6" fill="none" stroke="#dcdcdc" stroke-width="1.3"/><circle cx="5.6" cy="9" r="1.1" fill="#eee"/><circle cx="9" cy="9" r="1.1" fill="#eee"/><circle cx="12.4" cy="9" r="1.1" fill="#eee"/></svg>
<div class="t" style="left:865.5px;width:120px;text-align:center;top:706.5px;font-size:8.1px;color:#cfcfcf">Дополнительно</div>
<svg class="a" style="left:1237px;top:687px" width="17" height="17" viewBox="0 0 17 17"><path d="M5.5 1 H11.5 L16 5.5 V11.5 L11.5 16 H5.5 L1 11.5 V5.5 Z" fill="#1a0a0e" stroke="#e2294f" stroke-width="1.3"/><path d="M5.8 5.8 L11.2 11.2 M11.2 5.8 L5.8 11.2" stroke="#fff" stroke-width="1.8"/></svg>
<div class="t" style="left:1186.3px;width:120px;text-align:center;top:706.5px;font-size:8.1px;color:#cfcfcf">Завершение</div></body></html>
